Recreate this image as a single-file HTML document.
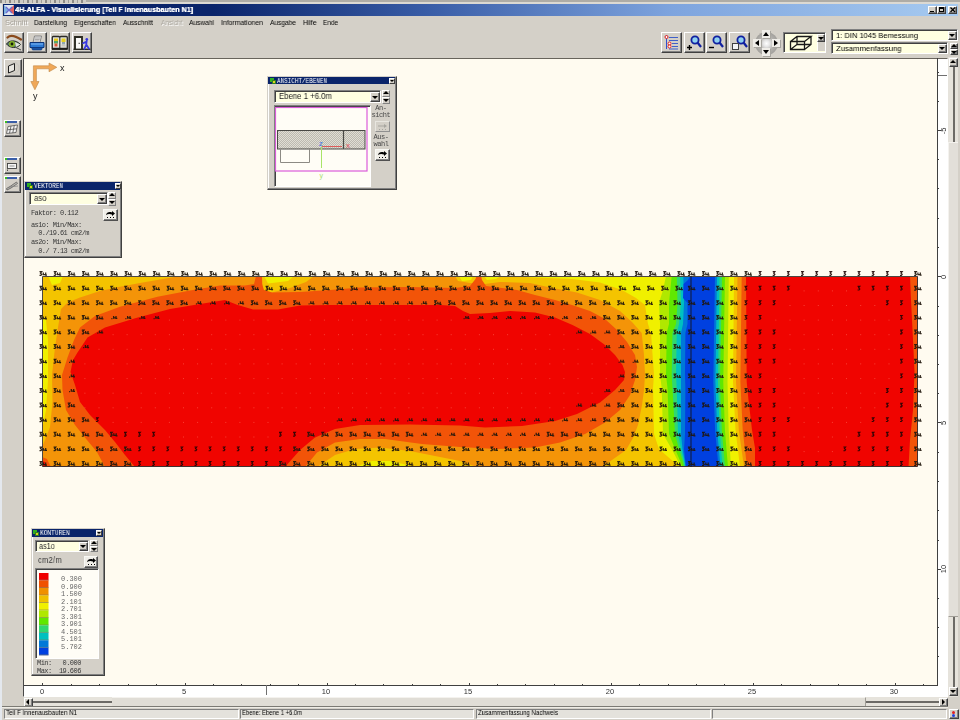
<!DOCTYPE html>
<html lang="de"><head><meta charset="utf-8"><title>4H-ALFA - Visualisierung</title>
<style>
*{box-sizing:border-box;margin:0;padding:0}
html,body{width:960px;height:720px;overflow:hidden;background:#d4d0c8}
body{position:relative;font-family:"Liberation Sans",sans-serif;font-size:8px;color:#000}
.a{position:absolute}
.t{position:absolute;white-space:nowrap;line-height:1;will-change:transform}
.m{font-family:"Liberation Mono",monospace}
.btn{position:absolute;background:#d4d0c8;border:1px solid;border-color:#fff #404040 #404040 #fff;box-shadow:inset -1px -1px 0 #808080}
.sunk{position:absolute;border:1px solid;border-color:#808080 #fff #fff #808080;box-shadow:inset 1px 1px 0 #404040}
.pan{position:absolute;background:#d4d0c8;border:1px solid;border-color:#d4d0c8 #404040 #404040 #d4d0c8;box-shadow:inset -1px -1px 0 #808080,inset 1px 1px 0 #fff}
.ptl{position:absolute;left:0;right:1px;top:0;height:7.500px;background:#0a246a}
.combo{position:absolute;background:#ffffe1;border:1px solid;border-color:#808080 #fff #fff #808080;box-shadow:inset 1px 1px 0 #404040}
.arr{position:absolute;width:0;height:0;border-left:3px solid transparent;border-right:3px solid transparent}
.dn{border-top:3px solid #000}.up{border-bottom:3px solid #000}
</style></head><body>
<!-- top strip (remnant of another window) -->
<div class="a" style="left:0;top:0;width:960px;height:4px;background:#dcd9d2"></div>
<div class="a" style="left:0;top:0;width:86px;height:3px;background:repeating-linear-gradient(90deg,#8c8a86 0 2px,#cfccc6 2px 5px,#a09e9a 5px 6px,#d4d0c8 6px 9px)"></div>
<div class="a" style="left:86px;top:0;width:874px;height:2px;background:#aeaca6"></div>
<!-- title bar -->
<div class="a" style="left:3px;top:4px;width:955px;height:12px;background:linear-gradient(90deg,#0a246a 0,#0a246a 22%,#3a5ea8 45%,#7ea4de 70%,#a6caf0 100%)"></div>
<svg class="a" style="left:4px;top:5px" width="10" height="10" viewBox="0 0 10 10"><rect width="10" height="10" fill="#dfe6f2"/><path d="M0 0L5 5L0 10Z" fill="#7fb0e0"/><path d="M10 0L5 5L10 10Z" fill="#e06060"/><path d="M2 2L8 8M8 2L2 8" stroke="#6a6ad0" stroke-width="1.2"/></svg>
<div class="t" style="left:15px;top:6px;font-size:7.600px;font-weight:bold;color:#fff;text-shadow:.300px 0 0 #fff;transform-origin:0 0;transform:scaleX(0.942)">4H-ALFA - Visualisierung [Teil F Innenausbauten N1]</div>
<div class="btn" style="left:928px;top:6px;width:9px;height:8px"></div><div class="a" style="left:930px;top:11px;width:4px;height:1px;background:#000"></div>
<div class="btn" style="left:937px;top:6px;width:9px;height:8px"></div><div class="a" style="left:939px;top:7px;width:5px;height:5px;border:1px solid #000;border-top-width:2px"></div>
<div class="btn" style="left:948px;top:6px;width:9px;height:8px"></div>
<svg class="a" style="left:950px;top:7px" width="6" height="6" viewBox="0 0 6 6"><path d="M0.5 0.5L5 5M5 0.5L0.5 5" stroke="#000" stroke-width="1.3"/></svg>
<!-- menu bar -->
<div class="t" style="left:5px;top:18.600px;font-size:7.400px;color:#a8a49c;text-shadow:1px 1px 0 #fff;transform-origin:0 0;transform:scaleX(0.995)">Schnitt</div>
<div class="t" style="left:33.5px;top:18.600px;font-size:7.400px;transform-origin:0 0;transform:scaleX(0.883)">Darstellung</div>
<div class="t" style="left:73.5px;top:18.600px;font-size:7.400px;transform-origin:0 0;transform:scaleX(0.897)">Eigenschaften</div>
<div class="t" style="left:123px;top:18.600px;font-size:7.400px;transform-origin:0 0;transform:scaleX(0.880)">Ausschnitt</div>
<div class="t" style="left:160.5px;top:18.600px;font-size:7.400px;color:#a8a49c;text-shadow:1px 1px 0 #fff;transform-origin:0 0;transform:scaleX(0.887)">Ansicht</div>
<div class="t" style="left:189px;top:18.600px;font-size:7.400px;transform-origin:0 0;transform:scaleX(0.895)">Auswahl</div>
<div class="t" style="left:221px;top:18.600px;font-size:7.400px;transform-origin:0 0;transform:scaleX(0.929)">Informationen</div>
<div class="t" style="left:270px;top:18.600px;font-size:7.400px;transform-origin:0 0;transform:scaleX(0.891)">Ausgabe</div>
<div class="t" style="left:302.5px;top:18.600px;font-size:7.400px;transform-origin:0 0;transform:scaleX(0.912)">Hilfe</div>
<div class="t" style="left:323px;top:18.600px;font-size:7.400px;transform-origin:0 0;transform:scaleX(0.869)">Ende</div>
<!-- toolbar left -->
<div class="btn" style="left:4px;top:32px;width:20px;height:21px"></div>
<div class="btn" style="left:27px;top:32px;width:20px;height:21px"></div>
<div class="btn" style="left:49.500px;top:32px;width:20px;height:21px"></div>
<div class="btn" style="left:72px;top:32px;width:20px;height:21px"></div>
<!-- eye icon -->
<svg class="a" style="left:5px;top:33px" width="18" height="19" viewBox="0 0 18 19"><path d="M2.500 4.500C5 2 10 2.500 16 6.500" stroke="#8a4a1c" stroke-width="2.200" fill="none" stroke-linecap="round"/><path d="M1.500 11C4 7 11 6.500 15.500 11.500C12 15.500 5 15.500 1.500 11Z" fill="#5c7870" stroke="#202820" stroke-width="1"/><path d="M10 9L15.500 11.500L11 14Z" fill="#e0e4dc"/><circle cx="7" cy="11" r="3" fill="#86b428"/><circle cx="7" cy="11" r="1.400" fill="#142008"/><path d="M11 14.500L16 17" stroke="#484848" stroke-width="1"/></svg>
<!-- printer icon -->
<svg class="a" style="left:28px;top:33px" width="18" height="19" viewBox="0 0 18 19"><path d="M6.500 3L13.500 3L12 9.500L5 9.500Z" fill="#e4e4e4" stroke="#707070" stroke-width=".8"/><path d="M7 5H12M6.700 6.500H11.700M6.300 8H11.300" stroke="#909090" stroke-width=".7"/><path d="M2 9.500H16V14.500H2Z" fill="#2c7ad4" stroke="#0c3478" stroke-width="1"/><path d="M3.500 14.500H14.500L13.500 17H4.500Z" fill="#1a54a4" stroke="#0c3478" stroke-width=".6"/><path d="M3 11H15" stroke="#80b8f4" stroke-width="1"/></svg>
<!-- book icon -->
<svg class="a" style="left:50.500px;top:34px" width="18" height="18" viewBox="0 0 18 18"><path d="M1.300 3.500Q1.300 2.500 2.300 2.500H7.500Q8.700 2.500 8.700 3.600Q8.700 2.500 9.900 2.500H15.300Q16.300 2.500 16.300 3.500V14.500H1.300Z" fill="#e4e4e0" stroke="#2a2a26" stroke-width="1.300"/><path d="M8.800 3V15.500" stroke="#2a2a26" stroke-width="1.100"/><path d="M1 15H16.600" stroke="#1c1c1a" stroke-width="1.800"/><rect x="3" y="4.500" width="4" height="2.500" fill="#e8c818"/><rect x="3" y="7" width="4" height="2.500" fill="#58a868"/><rect x="3.500" y="9.500" width="3" height="3" fill="#e05838"/><rect x="10.500" y="4.500" width="4" height="3.500" fill="#e8d020"/><rect x="11" y="8" width="3" height="2.500" fill="#90a8b0"/><rect x="10.500" y="10.500" width="4" height="2" fill="#c8c8c0"/></svg>
<!-- exit icon -->
<svg class="a" style="left:73px;top:34px" width="19" height="18" viewBox="0 0 19 18"><path d="M2 15V3H9V15" fill="#fbfbf8" stroke="#2c2c22" stroke-width="1.900"/><path d="M0.500 15.300H17.500" stroke="#2c2c22" stroke-width="1.400"/><path d="M5.500 9.300H7" stroke="#505048" stroke-width="1"/><circle cx="13.800" cy="5.300" r="1.300" fill="#3838e0"/><path d="M13.800 6.500L13.300 10.500L11.300 14.800M13.300 10.500L16 14.800M10 9.200L13.600 7.600" stroke="#3838e0" stroke-width="1.700" fill="none" stroke-linecap="round"/></svg>
<!-- toolbar right -->
<div class="btn" style="left:661px;top:32px;width:21px;height:21px"></div>
<div class="btn" style="left:684px;top:32px;width:21px;height:21px"></div>
<div class="btn" style="left:706px;top:32px;width:21px;height:21px"></div>
<div class="btn" style="left:729px;top:32px;width:21px;height:21px"></div>
<svg class="a" style="left:663px;top:34px" width="17" height="17" viewBox="0 0 17 17"><path d="M3.500 1V15" stroke="#3050d0" stroke-width="1"/><path d="M6 3.500H15M6 6.500H15M9 9.500H15M9 12.500H15M6 15H15" stroke="#4060c8" stroke-width="1"/><circle cx="3.5" cy="3" r="1.500" fill="#fff" stroke="#e02020" stroke-width="1"/><circle cx="6.500" cy="9.500" r="1.500" fill="#fff" stroke="#e02020" stroke-width="1"/><circle cx="6.500" cy="12.500" r="1.500" fill="#fff" stroke="#e02020" stroke-width="1"/></svg>
<svg class="a" style="left:686px;top:34px" width="17" height="17" viewBox="0 0 17 17"><circle cx="9" cy="6" r="3.600" fill="#8fd0f0" stroke="#1020a0" stroke-width="1.800"/><path d="M11.500 8.500L15 13" stroke="#1020a0" stroke-width="2.200"/><path d="M1 13.500H6M3.500 11V16" stroke="#000" stroke-width="1.400"/></svg>
<svg class="a" style="left:708px;top:34px" width="17" height="17" viewBox="0 0 17 17"><circle cx="9" cy="6" r="3.600" fill="#8fd0f0" stroke="#1020a0" stroke-width="1.800"/><path d="M11.500 8.500L15 13" stroke="#1020a0" stroke-width="2.200"/><path d="M1 13.500H6" stroke="#000" stroke-width="1.400"/></svg>
<svg class="a" style="left:731px;top:34px" width="17" height="17" viewBox="0 0 17 17"><circle cx="10" cy="6" r="3.600" fill="#8fd0f0" stroke="#1020a0" stroke-width="1.800"/><path d="M12.500 8.500L16 13" stroke="#1020a0" stroke-width="2.200"/><rect x="1.500" y="9.500" width="6" height="6" fill="#f4f4f4" stroke="#404040" stroke-width="1"/></svg>
<!-- nav pad -->
<div class="a" style="left:754.500px;top:31.500px;width:23px;height:23px;border-radius:50%;background:radial-gradient(circle,#fff 0,#e8e8e8 18%,#b4b2ae 45%,#a09e9a 75%,#b8b6b0 100%)"></div>
<div class="a" style="left:762px;top:29.500px;width:8px;height:8px;background:#efede8;box-shadow:1px 1px 0 #a8a6a0"></div><div class="a" style="left:763px;top:31.500px;width:0;height:0;border-left:3px solid transparent;border-right:3px solid transparent;border-bottom:4px solid #000"></div>
<div class="a" style="left:762px;top:48px;width:8px;height:8px;background:#efede8;box-shadow:1px 1px 0 #a8a6a0"></div><div class="a" style="left:763px;top:50px;width:0;height:0;border-left:3px solid transparent;border-right:3px solid transparent;border-top:4px solid #000"></div>
<div class="a" style="left:753px;top:39px;width:8px;height:8px;background:#efede8;box-shadow:1px 1px 0 #a8a6a0"></div><div class="a" style="left:754.500px;top:40px;width:0;height:0;border-top:3px solid transparent;border-bottom:3px solid transparent;border-right:4px solid #000"></div>
<div class="a" style="left:771.500px;top:39px;width:8px;height:8px;background:#efede8;box-shadow:1px 1px 0 #a8a6a0"></div><div class="a" style="left:773.500px;top:40px;width:0;height:0;border-top:3px solid transparent;border-bottom:3px solid transparent;border-left:4px solid #000"></div>
<!-- 3d view selector -->
<div class="combo" style="left:783px;top:32px;width:43px;height:21px"></div>
<svg class="a" style="left:789px;top:34px" width="24" height="17" viewBox="0 0 24 17"><path d="M1.500 7.500H15.500V15.500H1.500ZM1.500 7.500L8 2.500H22L15.500 7.500M22 2.500V10.500L15.500 15.500M8 2.500V10.500L1.500 15.500M8 10.500H22" fill="none" stroke="#181818" stroke-width="1.300"/></svg>
<div class="btn" style="left:817px;top:34px;width:8px;height:8px"></div><div class="arr dn" style="left:818px;top:37px"></div>
<div class="a" style="left:817px;top:42px;width:8px;height:9px;background:#d4d0c8;border-left:1px solid #fff"></div>
<!-- combos top right -->
<div class="combo" style="left:831px;top:29px;width:127px;height:12px"></div>
<div class="t" style="left:836px;top:31.500px;font-size:8px;transform-origin:0 0;transform:scaleX(0.941)">1: DIN 1045 Bemessung</div>
<div class="btn" style="left:948px;top:31px;width:9px;height:9px"></div><div class="arr dn" style="left:949px;top:34px"></div>
<div class="combo" style="left:831px;top:42px;width:117px;height:12px"></div>
<div class="t" style="left:836px;top:44.500px;font-size:8px;transform-origin:0 0;transform:scaleX(0.963)">Zusammenfassung</div>
<div class="btn" style="left:938px;top:44px;width:9px;height:9px"></div><div class="arr dn" style="left:939px;top:47px"></div>
<div class="btn" style="left:950px;top:43px;width:8px;height:6px"></div><div class="arr up" style="left:951px;top:44px;border-bottom-width:3px"></div>
<div class="btn" style="left:950px;top:49px;width:8px;height:6px"></div><div class="arr dn" style="left:951px;top:51px"></div>
<!-- window left edge highlight -->
<div class="a" style="left:0;top:4px;width:2px;height:716px;background:#e4e8ee"></div>
<!-- canvas -->
<div class="a" style="left:23px;top:57.500px;width:925px;height:639.500px;background:#fff;border:1px solid;border-color:#68645c #fff #fff #484848"></div>
<div class="a" style="left:24px;top:58.500px;width:913px;height:626.500px;background:#fffbf0"></div>
<!-- rulers -->
<div class="a" style="left:937px;top:58px;width:1px;height:628px;background:#404040"></div>
<div class="a" style="left:24px;top:685px;width:914px;height:1px;background:#404040"></div>
<!-- sidebar buttons -->
<div class="btn" style="left:4px;top:59px;width:18px;height:18px"></div>
<svg class="a" style="left:6px;top:61px" width="14" height="14" viewBox="0 0 14 14"><ellipse cx="8.500" cy="7" rx="4.500" ry="5.500" fill="none" stroke="#c8c6c0" stroke-width="1"/><path d="M2.500 5L8.500 2.500V9.500L2.500 12Z" fill="#e8e6e0" stroke="#202020" stroke-width="1"/></svg>
<div class="btn" style="left:4px;top:120px;width:17px;height:17px"></div>
<div class="a" style="left:5px;top:121px;width:14px;height:2px;background:#3a5ea8"></div><div class="a" style="left:5px;top:121px;width:2px;height:2px;background:#40c020"></div><div class="a" style="left:17px;top:121px;width:2px;height:2px;background:#e8e8e8"></div>
<svg class="a" style="left:6px;top:124px" width="13" height="11" viewBox="0 0 13 11"><path d="M2 2.500L11.500 1L10 8.500L0.500 9.500ZM5 2L3.500 9.200M8.300 1.500L6.800 8.800M1.500 5.800L10.800 4.800" fill="#f4f4f4" stroke="#505050" stroke-width=".8"/></svg>
<div class="btn" style="left:4px;top:157px;width:17px;height:17px"></div>
<div class="a" style="left:5px;top:158px;width:14px;height:2px;background:#3a5ea8"></div><div class="a" style="left:5px;top:158px;width:2px;height:2px;background:#40c020"></div><div class="a" style="left:17px;top:158px;width:2px;height:2px;background:#e8e8e8"></div>
<svg class="a" style="left:6px;top:161px" width="13" height="11" viewBox="0 0 13 11"><rect x="1.500" y="2.500" width="9" height="5" fill="#f4f4f4" stroke="#404040" stroke-width=".9"/><path d="M3.500 5H8.500" stroke="#909090" stroke-width="1"/><path d="M1.500 8.500V10" stroke="#404040" stroke-width=".9"/></svg>
<div class="btn" style="left:4px;top:176px;width:17px;height:17px"></div>
<div class="a" style="left:5px;top:177px;width:14px;height:2px;background:#3a5ea8"></div><div class="a" style="left:5px;top:177px;width:2px;height:2px;background:#40c020"></div><div class="a" style="left:17px;top:177px;width:2px;height:2px;background:#e8e8e8"></div>
<svg class="a" style="left:6px;top:180px" width="13" height="11" viewBox="0 0 13 11"><path d="M0.500 8.500L4 6.500L10.500 2L11.500 3.500L5 8L1 10Z" fill="#b8b6b0" stroke="#606060" stroke-width=".8"/><path d="M3 7L12 6" stroke="#808080" stroke-width=".7"/></svg>
<!-- axis icon -->
<svg class="a" style="left:28px;top:60px" width="32" height="32" viewBox="0 0 32 32"><path d="M5.400 5.800H21V3L28.800 7.300L21 11.800V8.800H8.400V21.500H11L6.900 29.800L2.800 21.500H5.400Z" fill="#f0a858" stroke="#c08848" stroke-width=".6"/></svg>
<div class="t" style="left:59.500px;top:63.500px;font-size:9px;color:#202020">x</div>
<div class="t" style="left:33px;top:92px;font-size:9px;color:#202020">y</div>
<!-- vertical scrollbar -->
<div class="a" style="left:948px;top:57px;width:10px;height:640px;background:#e6e3dc"></div>
<div class="a" style="left:953px;top:66px;width:2px;height:622px;background:#6c6a66"></div>
<div class="a" style="left:948px;top:142px;width:10px;height:475px;background:#e2dfd9;border-left:1px solid #f4f2ee;border-bottom:1px solid #a09d96;border-top:1px solid #f4f2ee"></div>
<div class="btn" style="left:949px;top:58px;width:9px;height:9px"></div><div class="arr up" style="left:950px;top:60px"></div>
<div class="btn" style="left:949px;top:687px;width:9px;height:9px"></div><div class="arr dn" style="left:950px;top:690px"></div>
<!-- horizontal scrollbar -->
<div class="a" style="left:24px;top:697px;width:924px;height:10px;background:#e6e3dc"></div>
<div class="a" style="left:32px;top:701px;width:908px;height:2px;background:#6c6a66"></div>
<div class="a" style="left:112px;top:697px;width:754px;height:10px;background:#e0ddd6;border-top:1px solid #f4f2ee;border-right:1px solid #a09d96"></div>
<div class="btn" style="left:24px;top:698px;width:9px;height:9px"></div><div class="a" style="left:26px;top:699px;width:0;height:0;border-top:3px solid transparent;border-bottom:3px solid transparent;border-right:3px solid #000"></div>
<div class="btn" style="left:939px;top:698px;width:9px;height:9px"></div><div class="a" style="left:942px;top:699px;width:0;height:0;border-top:3px solid transparent;border-bottom:3px solid transparent;border-left:3px solid #000"></div>
<div class="a" style="left:2px;top:706px;width:946px;height:1px;background:#7c7a74"></div><div class="a" style="left:2px;top:707px;width:946px;height:1px;background:#eeece6"></div>
<!-- status bar -->
<div class="sunk" style="left:4px;top:709px;width:235px;height:10px;box-shadow:none;background:#e4e2dc"></div><div class="t" style="left:6px;top:709.200px;font-size:7.5px;transform-origin:0 0;transform:scaleX(0.831)">Teil F Innenausbauten N1</div>
<div class="sunk" style="left:240px;top:709px;width:234px;height:10px;box-shadow:none;background:#e4e2dc"></div><div class="t" style="left:242px;top:709.200px;font-size:7.5px;transform-origin:0 0;transform:scaleX(0.780)">Ebene: Ebene 1 +6.0m</div>
<div class="sunk" style="left:476px;top:709px;width:235px;height:10px;box-shadow:none;background:#e4e2dc"></div><div class="t" style="left:478px;top:709.200px;font-size:7.5px;transform-origin:0 0;transform:scaleX(0.813)">Zusammenfassung Nachweis</div>
<div class="sunk" style="left:712px;top:709px;width:235px;height:10px;box-shadow:none;background:#e4e2dc"></div>
<div class="btn" style="left:949px;top:709px;width:10px;height:10px"></div><div class="a" style="left:952px;top:711px;width:3px;height:3px;border-radius:50%;background:#e02020"></div><div class="a" style="left:952px;top:714px;width:3px;height:3px;border-radius:50%;background:#2040e0"></div>
<!-- ruler ticks and labels -->
<svg class="a" style="left:0;top:0" width="960" height="720" viewBox="0 0 960 720" shape-rendering="crispEdges">
<path d="M42.5 682.5V685M71.5 683.8V685M99.5 683.8V685M128.5 683.8V685M156.5 683.8V685M185.5 682.5V685M213.5 683.8V685M241.5 683.8V685M270.5 683.8V685M298.5 683.8V685M327.5 682.5V685M355.5 683.8V685M383.5 683.8V685M412.5 683.8V685M440.5 683.8V685M469.5 682.5V685M497.5 683.8V685M525.5 683.8V685M554.5 683.8V685M582.5 683.8V685M611.5 682.5V685M639.5 683.8V685M668.5 683.8V685M696.5 683.8V685M724.5 683.8V685M753.5 682.5V685M781.5 683.8V685M810.5 683.8V685M838.5 683.8V685M866.5 683.8V685M895.5 682.5V685M923.5 683.8V685" stroke="#404040" stroke-width="1" fill="none"/>
<path d="M938 72.5H939.2M938 101.5H939.2M938 130.5H940.5M938 159.5H939.2M938 188.5H939.2M938 218.5H939.2M938 247.5H939.2M938 276.5H940.5M938 306.5H939.2M938 335.5H939.2M938 364.5H939.2M938 393.5H939.2M938 422.5H940.5M938 452.5H939.2M938 481.5H939.2M938 510.5H939.2M938 540.5H939.2M938 569.5H940.5M938 598.5H939.2M938 627.5H939.2M938 656.5H939.2" stroke="#404040" stroke-width="1" fill="none"/>
<path d="M266.500 685V695M938 75.500H947" stroke="#707070" stroke-width="1" fill="none"/>
</svg>
<div class="t" style="left:31.5px;top:688px;width:20px;text-align:center;font-size:7.5px;color:#303030">0</div>
<div class="t" style="left:173.6px;top:688px;width:20px;text-align:center;font-size:7.5px;color:#303030">5</div>
<div class="t" style="left:315.6px;top:688px;width:20px;text-align:center;font-size:7.5px;color:#303030">10</div>
<div class="t" style="left:457.6px;top:688px;width:20px;text-align:center;font-size:7.5px;color:#303030">15</div>
<div class="t" style="left:599.7px;top:688px;width:20px;text-align:center;font-size:7.5px;color:#303030">20</div>
<div class="t" style="left:741.8px;top:688px;width:20px;text-align:center;font-size:7.5px;color:#303030">25</div>
<div class="t" style="left:883.8px;top:688px;width:20px;text-align:center;font-size:7.5px;color:#303030">30</div>
<div class="t" style="left:934px;top:126.5px;width:20px;height:8px;text-align:center;font-size:7.5px;color:#303030;transform:rotate(-90deg)">-5</div>
<div class="t" style="left:934px;top:272.8px;width:20px;height:8px;text-align:center;font-size:7.5px;color:#303030;transform:rotate(-90deg)">0</div>
<div class="t" style="left:934px;top:419.0px;width:20px;height:8px;text-align:center;font-size:7.5px;color:#303030;transform:rotate(-90deg)">5</div>
<div class="t" style="left:934px;top:565.2px;width:20px;height:8px;text-align:center;font-size:7.5px;color:#303030;transform:rotate(-90deg)">10</div>
<!-- contour plot -->
<svg class="a" style="left:0;top:0" width="960" height="720" viewBox="0 0 960 720">
<clipPath id="pc"><rect x="42.50" y="276.25" width="875.00" height="190.00"/></clipPath>
<g clip-path="url(#pc)">
<rect x="42" y="276" width="650" height="191" fill="#f4c400"/>
<polygon points="500.0,276.0 535.0,277.5 572.0,279.0 600.0,282.5 622.0,290.0 636.0,298.0 645.0,305.0 648.0,324.0 651.0,333.0 654.0,375.0 653.0,388.0 654.0,434.0 659.0,449.0 675.0,463.0 678.0,467.0 692.0,467.0 692.0,276.0" fill="#f0f000"/>
<polygon points="666.0,276.0 663.0,290.0 659.0,303.0 660.0,324.0 660.0,375.0 661.7,388.0 663.0,434.0 671.7,449.0 679.0,463.0 680.0,467.0 692.0,467.0 692.0,276.0" fill="#b0e800"/>
<polygon points="671.7,276.0 669.0,303.0 669.0,324.0 666.7,333.0 666.0,375.0 667.5,388.0 669.0,434.0 675.0,449.0 681.0,463.0 682.0,467.0 692.0,467.0 692.0,276.0" fill="#60e800"/>
<polygon points="676.7,276.0 677.5,303.0 676.0,324.0 672.5,333.0 671.7,375.0 672.5,388.0 675.0,434.0 679.0,449.0 683.3,463.0 684.0,467.0 692.0,467.0 692.0,276.0" fill="#30d870"/>
<polygon points="680.0,276.0 681.0,303.0 679.0,324.0 676.7,333.0 676.0,375.0 676.7,388.0 678.0,434.0 681.0,449.0 684.5,463.0 685.0,467.0 692.0,467.0 692.0,276.0" fill="#00c0c0"/>
<polygon points="683.3,276.0 684.0,303.0 683.0,324.0 681.0,333.0 681.0,388.0 681.0,434.0 682.5,449.0 685.0,463.0 685.5,467.0 692.0,467.0 692.0,276.0" fill="#0078d8"/>
<polygon points="690.0,276.0 688.0,280.0 683.5,284.0 683.0,298.0 687.5,303.0 687.5,324.0 685.4,333.0 685.0,375.0 685.4,388.0 685.0,434.0 684.0,449.0 685.5,463.0 686.0,467.0 692.0,467.0 692.0,276.0" fill="#0040e0"/>
<polygon points="48.0,276.0 63.0,276.0 60.0,283.0 52.0,285.0" fill="#f0f000"/>
<polygon points="42.0,315.0 46.0,320.0 48.0,340.0 48.0,380.0 46.0,410.0 42.0,430.0" fill="#f0f000"/>
<polygon points="459.0,276.0 473.0,276.0 471.0,280.0 462.0,281.0" fill="#f0f000"/>
<polygon points="484.0,276.0 501.0,276.0 496.0,279.0 487.0,280.0" fill="#f0f000"/>
<polygon points="355.0,467.0 372.0,461.0 390.0,461.0 410.0,465.5 412.0,467.0" fill="#f0f000"/>
<polygon points="264.0,276.0 294.0,276.0 288.0,281.0 268.0,283.5" fill="#f0f000"/>
<polygon points="42.0,447.0 45.0,440.0 50.0,427.0 52.5,402.0 52.0,375.0 55.0,347.5 58.0,327.5 61.0,309.0 67.5,302.5 80.0,297.5 100.0,291.0 120.0,286.8 140.0,283.0 160.0,279.5 180.0,276.0 262.0,276.0 263.0,290.0 272.0,292.5 290.0,288.0 306.0,282.0 314.0,276.0 455.0,276.0 458.0,281.0 470.0,283.0 485.0,284.0 500.0,282.0 530.0,283.0 550.0,287.5 577.0,292.5 600.0,300.0 620.0,311.0 632.0,322.0 641.7,333.0 644.0,355.0 645.0,375.0 644.0,390.0 642.0,405.0 638.0,425.0 633.0,438.0 626.0,450.0 612.0,460.0 602.0,467.0 477.0,467.0 460.0,461.0 435.0,456.0 410.0,451.0 380.0,447.5 355.0,449.0 335.0,455.0 317.0,467.0 42.0,467.0" fill="#f49408"/>
<polygon points="105.0,467.0 97.0,452.0 87.0,440.0 75.0,425.0 66.0,410.0 62.5,390.0 62.0,375.0 67.5,357.5 74.0,340.0 80.0,327.5 95.0,316.0 120.0,306.8 157.5,296.8 190.0,290.5 220.0,285.5 245.0,285.5 254.0,284.0 256.0,276.0 262.0,276.0 262.0,284.0 264.0,290.0 272.0,292.5 300.0,292.0 330.0,290.0 360.0,287.5 410.0,287.0 455.0,288.0 470.0,286.0 475.5,279.0 476.5,276.0 481.0,276.0 482.0,280.0 486.0,286.0 517.0,290.0 535.0,295.0 555.0,300.0 572.0,305.0 590.0,311.0 605.0,319.0 617.0,330.0 627.0,342.0 635.0,355.0 637.0,367.0 635.0,380.0 630.0,395.0 620.0,410.0 605.0,422.5 585.0,434.0 560.0,442.5 535.0,447.5 497.0,449.0 460.0,447.0 422.0,444.0 385.0,439.0 360.0,439.0 335.0,442.5 317.0,452.5 305.0,467.0" fill="#f25408"/>
<polygon points="135.0,467.0 125.0,455.0 115.0,442.0 105.0,430.0 90.0,415.0 80.0,402.0 75.0,385.0 70.5,372.0 73.0,360.0 77.5,352.5 87.5,337.5 105.0,327.5 136.0,318.0 170.0,309.0 200.0,304.0 225.0,300.0 237.0,304.7 253.0,309.5 278.0,309.5 300.0,305.5 330.0,305.0 380.0,305.0 440.0,305.0 455.0,306.0 463.0,311.0 470.0,314.0 490.0,313.0 510.0,311.0 535.0,312.5 555.0,317.5 572.5,325.0 590.0,334.0 605.0,345.0 615.0,355.0 622.5,365.0 625.0,372.0 624.0,380.0 615.0,390.0 600.0,402.5 577.0,414.0 555.0,421.0 522.0,426.0 485.0,427.5 460.0,425.5 410.0,424.5 360.0,425.0 335.0,429.0 315.0,437.5 300.0,450.0 285.0,467.0" fill="#f00400"/>
<polygon points="42.0,457.0 47.0,459.0 51.0,467.0 42.0,467.0" fill="#f25408"/>
<polygon points="42.0,461.0 45.0,462.0 47.0,467.0 42.0,467.0" fill="#f00400"/>
<polygon points="691.0,276.0 691.0,382.0 691.0,430.0 691.0,467.0 760.0,467.0 760.0,276.0" fill="#0040e0"/>
<polygon points="715.0,276.0 713.3,382.0 715.1,430.0 718.5,467.0 760.0,467.0 760.0,276.0" fill="#0078d8"/>
<polygon points="717.0,276.0 715.4,382.0 717.2,430.0 720.5,467.0 760.0,467.0 760.0,276.0" fill="#00c0c0"/>
<polygon points="719.6,276.0 718.0,382.0 719.6,430.0 722.5,467.0 760.0,467.0 760.0,276.0" fill="#30d870"/>
<polygon points="722.0,276.0 720.0,382.0 721.8,430.0 725.0,467.0 760.0,467.0 760.0,276.0" fill="#60e800"/>
<polygon points="725.0,276.0 723.3,382.0 724.9,430.0 728.0,467.0 760.0,467.0 760.0,276.0" fill="#b0e800"/>
<polygon points="728.8,276.0 727.5,382.0 728.7,430.0 731.0,467.0 760.0,467.0 760.0,276.0" fill="#f0f000"/>
<polygon points="734.0,276.0 733.0,382.0 735.5,430.0 740.0,467.0 760.0,467.0 760.0,276.0" fill="#f4c400"/>
<polygon points="737.5,276.0 736.0,382.0 738.8,430.0 744.0,467.0 760.0,467.0 760.0,276.0" fill="#f49408"/>
<polygon points="741.7,276.0 740.4,382.0 742.7,430.0 747.0,467.0 760.0,467.0 760.0,276.0" fill="#f25408"/>
<polygon points="746.0,276.0 746.7,382.0 748.5,400.0 752.0,430.0 755.0,448.0 755.0,467.0 918.0,467.0 918.0,276.0" fill="#f00400"/>
<polygon points="910.0,276.0 918.0,276.0 918.0,467.0 908.5,467.0 910.0,440.0 913.0,410.0 914.5,372.0 913.0,340.0 911.0,300.0" fill="#f25408"/>
</g>
<path d="M42.500 466.500V276.500H917.500" fill="none" stroke="#4c4640" stroke-width="1"/>
<path d="M42.500 466.500H917.500V276.500" fill="none" stroke="#403030" stroke-width="1"/>
<path d="M691 276V467" stroke="#101830" stroke-width="1"/>
<path d="M39.5 271.6h2.200l-1.200 1.500 1.200 1.200-.800 1h-1.400m3.800-2.800v2.800m0-.700h2.400m0-2.100v2.500h1.300M53.7 271.6h2.200l-1.200 1.500 1.200 1.200-.800 1h-1.400m3.800-2.800v2.800m0-.700h2.400m0-2.100v2.500h1.300M67.9 271.6h2.200l-1.200 1.500 1.200 1.200-.800 1h-1.400m3.800-2.800v2.800m0-.700h2.400m0-2.100v2.500h1.300M82 271.6h2.200l-1.200 1.500 1.200 1.200-.800 1h-1.400m3.800-2.800v2.800m0-.700h2.400m0-2.100v2.500h1.300M96.2 271.6h2.200l-1.200 1.500 1.200 1.200-.800 1h-1.400m3.800-2.800v2.800m0-.700h2.400m0-2.100v2.500h1.300M110.4 271.6h2.200l-1.200 1.500 1.200 1.200-.800 1h-1.400m3.800-2.800v2.800m0-.700h2.400m0-2.100v2.500h1.300M124.6 271.6h2.200l-1.200 1.500 1.200 1.200-.800 1h-1.400m3.800-2.800v2.800m0-.700h2.400m0-2.100v2.500h1.300M138.7 271.6h2.200l-1.200 1.500 1.200 1.200-.800 1h-1.400m3.800-2.800v2.800m0-.700h2.400m0-2.100v2.500h1.300M152.9 271.6h2.200l-1.200 1.500 1.200 1.200-.800 1h-1.400m3.800-2.800v2.800m0-.700h2.400m0-2.100v2.500h1.300M167.1 271.6h2.200l-1.200 1.500 1.200 1.200-.800 1h-1.400m3.800-2.800v2.800m0-.700h2.400m0-2.100v2.500h1.300M181.2 271.6h2.200l-1.200 1.500 1.200 1.200-.800 1h-1.400m3.800-2.800v2.800m0-.700h2.400m0-2.100v2.500h1.300M195.4 271.6h2.200l-1.200 1.500 1.200 1.200-.800 1h-1.400m3.800-2.800v2.800m0-.700h2.400m0-2.100v2.500h1.300M209.6 271.6h2.200l-1.200 1.500 1.200 1.200-.800 1h-1.400m3.800-2.800v2.800m0-.700h2.400m0-2.100v2.500h1.300M223.8 271.6h2.200l-1.200 1.500 1.200 1.200-.800 1h-1.400m3.800-2.800v2.800m0-.700h2.400m0-2.100v2.500h1.300M238 271.6h2.200l-1.200 1.500 1.200 1.200-.800 1h-1.400m3.800-2.800v2.800m0-.700h2.400m0-2.100v2.500h1.300M252.1 271.6h2.200l-1.200 1.500 1.200 1.200-.800 1h-1.400m3.800-2.800v2.800m0-.700h2.400m0-2.100v2.500h1.300M266.3 271.6h2.200l-1.200 1.500 1.200 1.200-.800 1h-1.400m3.800-2.800v2.800m0-.700h2.400m0-2.100v2.500h1.300M280.5 271.6h2.200l-1.200 1.500 1.200 1.200-.800 1h-1.400m3.800-2.800v2.800m0-.700h2.400m0-2.100v2.500h1.300M294.6 271.6h2.200l-1.200 1.500 1.200 1.200-.800 1h-1.400m3.800-2.800v2.800m0-.700h2.400m0-2.100v2.500h1.300M308.8 271.6h2.200l-1.200 1.500 1.200 1.200-.800 1h-1.400m3.800-2.800v2.800m0-.700h2.400m0-2.100v2.500h1.300M323 271.6h2.200l-1.200 1.500 1.200 1.200-.800 1h-1.400m3.800-2.800v2.800m0-.700h2.400m0-2.100v2.500h1.300M337.2 271.6h2.200l-1.200 1.500 1.200 1.200-.800 1h-1.400m3.800-2.800v2.800m0-.700h2.400m0-2.100v2.500h1.300M351.4 271.6h2.200l-1.200 1.500 1.200 1.200-.800 1h-1.400m3.800-2.800v2.800m0-.700h2.400m0-2.100v2.500h1.300M365.5 271.6h2.200l-1.200 1.500 1.200 1.200-.800 1h-1.400m3.800-2.800v2.800m0-.700h2.400m0-2.100v2.500h1.300M379.7 271.6h2.200l-1.200 1.500 1.200 1.200-.800 1h-1.400m3.800-2.800v2.800m0-.700h2.400m0-2.100v2.500h1.300M393.9 271.6h2.200l-1.200 1.500 1.200 1.200-.800 1h-1.400m3.800-2.800v2.800m0-.700h2.400m0-2.100v2.500h1.300M408.1 271.6h2.200l-1.200 1.500 1.200 1.200-.800 1h-1.400m3.800-2.800v2.800m0-.700h2.400m0-2.100v2.500h1.300M422.2 271.6h2.200l-1.200 1.500 1.200 1.200-.800 1h-1.400m3.800-2.800v2.800m0-.700h2.400m0-2.100v2.500h1.300M436.4 271.6h2.200l-1.200 1.500 1.200 1.200-.800 1h-1.400m3.800-2.800v2.800m0-.700h2.400m0-2.100v2.500h1.300M450.6 271.6h2.200l-1.200 1.500 1.200 1.200-.800 1h-1.400m3.800-2.800v2.800m0-.700h2.400m0-2.100v2.500h1.300M464.8 271.6h2.200l-1.200 1.500 1.200 1.200-.800 1h-1.400m3.800-2.800v2.800m0-.700h2.400m0-2.100v2.500h1.300M478.9 271.6h2.200l-1.200 1.500 1.200 1.200-.800 1h-1.400m3.800-2.800v2.800m0-.700h2.400m0-2.100v2.500h1.300M493.1 271.6h2.200l-1.200 1.500 1.200 1.200-.800 1h-1.400m3.800-2.800v2.800m0-.700h2.400m0-2.100v2.500h1.300M507.3 271.6h2.200l-1.200 1.500 1.200 1.200-.800 1h-1.400m3.800-2.800v2.800m0-.700h2.400m0-2.100v2.500h1.300M521.5 271.6h2.200l-1.200 1.500 1.200 1.200-.800 1h-1.400m3.800-2.800v2.800m0-.700h2.400m0-2.100v2.500h1.300M535.6 271.6h2.200l-1.200 1.500 1.200 1.200-.800 1h-1.400m3.800-2.800v2.800m0-.700h2.400m0-2.100v2.500h1.300M549.8 271.6h2.200l-1.200 1.500 1.200 1.200-.800 1h-1.400m3.800-2.800v2.800m0-.700h2.400m0-2.100v2.500h1.300M564 271.6h2.200l-1.200 1.500 1.200 1.200-.800 1h-1.400m3.800-2.800v2.800m0-.700h2.400m0-2.100v2.500h1.300M578.1 271.6h2.200l-1.200 1.500 1.200 1.200-.800 1h-1.400m3.800-2.800v2.800m0-.700h2.400m0-2.100v2.500h1.300M592.3 271.6h2.200l-1.200 1.500 1.200 1.200-.800 1h-1.400m3.800-2.800v2.800m0-.700h2.400m0-2.100v2.500h1.300M606.5 271.6h2.200l-1.200 1.500 1.200 1.200-.800 1h-1.400m3.800-2.800v2.800m0-.700h2.400m0-2.100v2.500h1.300M620.7 271.6h2.200l-1.200 1.500 1.200 1.200-.800 1h-1.400m3.800-2.800v2.800m0-.700h2.400m0-2.100v2.500h1.300M634.9 271.6h2.200l-1.200 1.500 1.200 1.200-.800 1h-1.400m3.800-2.800v2.800m0-.700h2.400m0-2.100v2.500h1.300M649 271.6h2.200l-1.200 1.500 1.200 1.200-.800 1h-1.400m3.800-2.800v2.800m0-.700h2.400m0-2.100v2.500h1.300M663.2 271.6h2.200l-1.200 1.500 1.200 1.200-.800 1h-1.400m3.800-2.800v2.800m0-.700h2.400m0-2.100v2.500h1.300M677.4 271.6h2.200l-1.200 1.500 1.200 1.200-.800 1h-1.400m3.800-2.800v2.800m0-.700h2.400m0-2.100v2.500h1.300M687.9 271.6h2.200l-1.200 1.500 1.200 1.200-.800 1h-1.400m3.800-2.800v2.800m0-.700h2.400m0-2.100v2.500h1.300M702 271.6h2.200l-1.200 1.500 1.200 1.200-.800 1h-1.400m3.800-2.800v2.800m0-.700h2.400m0-2.100v2.500h1.300M716.2 271.6h2.200l-1.200 1.500 1.200 1.200-.800 1h-1.400m3.800-2.800v2.800m0-.700h2.400m0-2.100v2.500h1.300M730.3 271.6h2.200l-1.200 1.500 1.200 1.200-.800 1h-1.400m3.800-2.800v2.800m0-.700h2.400m0-2.100v2.500h1.300M744.5 271.6h2.200l-1.200 1.500 1.200 1.200-.800 1h-1.400m3.800-2.800v2.800m0-.700h2.400m0-2.100v2.500h1.300M914.1 271.6h2.200l-1.200 1.500 1.200 1.200-.800 1h-1.400m3.800-2.800v2.800m0-.700h2.400m0-2.100v2.500h1.300M39.5 286.3h2.200l-1.200 1.500 1.200 1.200-.800 1h-1.400m3.800-2.800v2.800m0-.700h2.400m0-2.100v2.500h1.300M53.6 286.3h2.200l-1.200 1.500 1.200 1.200-.800 1h-1.400m3.800-2.800v2.800m0-.700h2.400m0-2.100v2.500h1.300M67.8 286.3h2.200l-1.200 1.500 1.200 1.200-.800 1h-1.400m3.800-2.800v2.800m0-.700h2.400m0-2.100v2.500h1.300M81.9 286.3h2.200l-1.200 1.500 1.200 1.200-.800 1h-1.400m3.800-2.800v2.800m0-.700h2.400m0-2.100v2.500h1.300M96 286.3h2.200l-1.200 1.500 1.200 1.200-.800 1h-1.400m3.800-2.800v2.800m0-.700h2.400m0-2.100v2.500h1.300M110.2 286.3h2.200l-1.200 1.500 1.200 1.200-.800 1h-1.400m3.800-2.800v2.800m0-.700h2.400m0-2.100v2.500h1.300M124.3 286.3h2.200l-1.200 1.500 1.200 1.200-.800 1h-1.400m3.800-2.800v2.800m0-.700h2.400m0-2.100v2.500h1.300M138.4 286.3h2.200l-1.200 1.500 1.200 1.200-.800 1h-1.400m3.800-2.800v2.800m0-.700h2.400m0-2.100v2.500h1.300M152.5 286.3h2.200l-1.200 1.500 1.200 1.200-.800 1h-1.400m3.800-2.800v2.800m0-.700h2.400m0-2.100v2.500h1.300M166.7 286.3h2.200l-1.200 1.500 1.200 1.200-.800 1h-1.400m3.800-2.800v2.800m0-.700h2.400m0-2.100v2.500h1.300M180.8 286.3h2.200l-1.200 1.500 1.200 1.200-.800 1h-1.400m3.800-2.800v2.800m0-.700h2.400m0-2.100v2.500h1.300M194.9 286.3h2.200l-1.200 1.500 1.200 1.200-.800 1h-1.400m3.800-2.800v2.800m0-.700h2.400m0-2.100v2.500h1.300M209.1 286.3h2.200l-1.200 1.500 1.200 1.200-.800 1h-1.400m3.800-2.800v2.800m0-.700h2.400m0-2.100v2.500h1.300M223.2 286.3h2.200l-1.200 1.500 1.200 1.200-.800 1h-1.400m3.800-2.800v2.800m0-.700h2.400m0-2.100v2.500h1.300M237.3 286.3h2.200l-1.200 1.500 1.200 1.200-.800 1h-1.400m3.800-2.800v2.800m0-.700h2.400m0-2.100v2.500h1.300M251.5 286.3h2.200l-1.200 1.500 1.200 1.200-.800 1h-1.400m3.800-2.800v2.800m0-.700h2.400m0-2.100v2.500h1.300M265.6 286.3h2.200l-1.200 1.500 1.200 1.200-.800 1h-1.400m3.800-2.800v2.800m0-.700h2.400m0-2.100v2.500h1.300M279.7 286.3h2.200l-1.200 1.500 1.200 1.200-.800 1h-1.400m3.800-2.800v2.800m0-.700h2.400m0-2.100v2.500h1.300M293.8 286.3h2.200l-1.200 1.500 1.200 1.200-.800 1h-1.400m3.800-2.800v2.800m0-.700h2.400m0-2.100v2.500h1.300M308 286.3h2.200l-1.200 1.500 1.200 1.200-.800 1h-1.400m3.800-2.800v2.800m0-.700h2.400m0-2.100v2.500h1.300M322.1 286.3h2.200l-1.200 1.500 1.200 1.200-.800 1h-1.400m3.800-2.800v2.800m0-.700h2.400m0-2.100v2.500h1.300M336.2 286.3h2.200l-1.200 1.500 1.200 1.200-.800 1h-1.400m3.800-2.800v2.800m0-.700h2.400m0-2.100v2.500h1.300M350.4 286.3h2.200l-1.200 1.500 1.200 1.200-.800 1h-1.400m3.800-2.800v2.800m0-.700h2.400m0-2.100v2.500h1.300M364.5 286.3h2.200l-1.200 1.500 1.200 1.200-.800 1h-1.400m3.800-2.800v2.800m0-.700h2.400m0-2.100v2.500h1.300M378.6 286.3h2.200l-1.200 1.500 1.200 1.200-.800 1h-1.400m3.800-2.800v2.800m0-.700h2.400m0-2.100v2.500h1.300M392.8 286.3h2.200l-1.200 1.500 1.200 1.200-.800 1h-1.400m3.800-2.800v2.800m0-.700h2.400m0-2.100v2.500h1.300M406.9 286.3h2.200l-1.200 1.500 1.200 1.200-.800 1h-1.400m3.800-2.800v2.800m0-.700h2.400m0-2.100v2.500h1.300M421 286.3h2.200l-1.200 1.500 1.200 1.200-.800 1h-1.400m3.800-2.800v2.800m0-.700h2.400m0-2.100v2.500h1.300M435.1 286.3h2.200l-1.200 1.500 1.200 1.200-.800 1h-1.400m3.800-2.800v2.800m0-.700h2.400m0-2.100v2.500h1.300M449.3 286.3h2.200l-1.200 1.500 1.200 1.200-.800 1h-1.400m3.800-2.800v2.800m0-.700h2.400m0-2.100v2.500h1.300M463.4 286.3h2.200l-1.200 1.500 1.200 1.200-.800 1h-1.400m3.800-2.800v2.800m0-.700h2.400m0-2.100v2.500h1.300M477.5 286.3h2.200l-1.200 1.500 1.200 1.200-.800 1h-1.400m3.800-2.800v2.800m0-.700h2.400m0-2.100v2.500h1.300M491.7 286.3h2.200l-1.200 1.500 1.200 1.200-.800 1h-1.400m3.800-2.800v2.800m0-.700h2.400m0-2.100v2.500h1.300M505.8 286.3h2.200l-1.200 1.500 1.200 1.200-.800 1h-1.400m3.800-2.800v2.800m0-.700h2.400m0-2.100v2.500h1.300M519.9 286.3h2.200l-1.200 1.500 1.200 1.200-.800 1h-1.400m3.800-2.800v2.800m0-.700h2.400m0-2.100v2.500h1.300M534 286.3h2.200l-1.200 1.500 1.200 1.200-.800 1h-1.400m3.800-2.800v2.800m0-.700h2.400m0-2.100v2.500h1.300M548.2 286.3h2.200l-1.200 1.500 1.200 1.200-.800 1h-1.400m3.800-2.800v2.800m0-.700h2.400m0-2.100v2.500h1.300M562.3 286.3h2.200l-1.200 1.500 1.200 1.200-.800 1h-1.400m3.800-2.800v2.800m0-.700h2.400m0-2.100v2.500h1.300M576.4 286.3h2.200l-1.200 1.500 1.200 1.200-.800 1h-1.400m3.800-2.800v2.800m0-.700h2.400m0-2.100v2.500h1.300M590.6 286.3h2.200l-1.200 1.500 1.200 1.200-.800 1h-1.400m3.800-2.800v2.800m0-.700h2.400m0-2.100v2.500h1.300M604.7 286.3h2.200l-1.200 1.500 1.200 1.200-.800 1h-1.400m3.800-2.800v2.800m0-.700h2.400m0-2.100v2.500h1.300M618.8 286.3h2.200l-1.200 1.500 1.200 1.200-.800 1h-1.400m3.800-2.800v2.800m0-.700h2.400m0-2.100v2.500h1.300M633 286.3h2.200l-1.200 1.500 1.200 1.200-.800 1h-1.400m3.800-2.800v2.800m0-.700h2.400m0-2.100v2.500h1.300M647.1 286.3h2.200l-1.200 1.500 1.200 1.200-.800 1h-1.400m3.800-2.800v2.800m0-.700h2.400m0-2.100v2.500h1.300M661.2 286.3h2.200l-1.200 1.500 1.200 1.200-.800 1h-1.400m3.800-2.800v2.800m0-.700h2.400m0-2.100v2.500h1.300M675.4 286.3h2.200l-1.200 1.500 1.200 1.200-.800 1h-1.400m3.800-2.800v2.800m0-.700h2.400m0-2.100v2.500h1.300M687.9 286.3h2.200l-1.200 1.500 1.200 1.200-.800 1h-1.400m3.800-2.800v2.800m0-.700h2.400m0-2.100v2.500h1.300M702 286.3h2.200l-1.200 1.500 1.200 1.200-.800 1h-1.400m3.800-2.800v2.800m0-.700h2.400m0-2.100v2.500h1.300M716.2 286.3h2.200l-1.200 1.500 1.200 1.200-.800 1h-1.400m3.800-2.800v2.800m0-.700h2.400m0-2.100v2.500h1.300M730.3 286.3h2.200l-1.200 1.500 1.200 1.200-.800 1h-1.400m3.800-2.800v2.800m0-.700h2.400m0-2.100v2.500h1.300M914.1 286.3h2.200l-1.200 1.500 1.200 1.200-.800 1h-1.400m3.800-2.800v2.800m0-.700h2.400m0-2.100v2.500h1.300M39.5 300.9h2.200l-1.200 1.500 1.200 1.200-.800 1h-1.400m3.800-2.800v2.800m0-.700h2.400m0-2.100v2.500h1.300M53.6 300.9h2.200l-1.200 1.500 1.200 1.200-.800 1h-1.400m3.800-2.800v2.800m0-.700h2.400m0-2.100v2.500h1.300M67.7 300.9h2.200l-1.200 1.500 1.200 1.200-.800 1h-1.400m3.800-2.800v2.800m0-.700h2.400m0-2.100v2.500h1.300M81.8 300.9h2.200l-1.200 1.500 1.200 1.200-.800 1h-1.400m3.800-2.800v2.800m0-.700h2.400m0-2.100v2.500h1.300M95.9 300.9h2.200l-1.200 1.500 1.200 1.200-.800 1h-1.400m3.800-2.800v2.800m0-.700h2.400m0-2.100v2.500h1.300M110 300.9h2.200l-1.200 1.500 1.200 1.200-.800 1h-1.400m3.800-2.800v2.800m0-.700h2.400m0-2.100v2.500h1.300M124 300.9h2.200l-1.200 1.500 1.200 1.200-.800 1h-1.400m3.800-2.800v2.800m0-.700h2.400m0-2.100v2.500h1.300M138.1 300.9h2.200l-1.200 1.500 1.200 1.200-.800 1h-1.400m3.800-2.800v2.800m0-.700h2.400m0-2.100v2.500h1.300M152.2 300.9h2.200l-1.200 1.500 1.200 1.200-.800 1h-1.400m3.800-2.800v2.800m0-.700h2.400m0-2.100v2.500h1.300M166.3 300.9h2.200l-1.200 1.500 1.200 1.200-.800 1h-1.400m3.800-2.800v2.800m0-.700h2.400m0-2.100v2.500h1.300M180.4 300.9h2.200l-1.200 1.500 1.200 1.200-.800 1h-1.400m3.800-2.800v2.800m0-.700h2.400m0-2.100v2.500h1.300M250.8 300.9h2.200l-1.200 1.500 1.200 1.200-.800 1h-1.400m3.800-2.800v2.800m0-.700h2.400m0-2.100v2.500h1.300M264.9 300.9h2.200l-1.200 1.500 1.200 1.200-.800 1h-1.400m3.800-2.800v2.800m0-.700h2.400m0-2.100v2.500h1.300M279 300.9h2.200l-1.200 1.500 1.200 1.200-.800 1h-1.400m3.800-2.800v2.800m0-.700h2.400m0-2.100v2.500h1.300M293.1 300.9h2.200l-1.200 1.500 1.200 1.200-.800 1h-1.400m3.800-2.800v2.800m0-.700h2.400m0-2.100v2.500h1.300M434 300.9h2.200l-1.200 1.500 1.200 1.200-.800 1h-1.400m3.800-2.800v2.800m0-.700h2.400m0-2.100v2.500h1.300M448.1 300.9h2.200l-1.200 1.500 1.200 1.200-.800 1h-1.400m3.800-2.800v2.800m0-.700h2.400m0-2.100v2.500h1.300M462.2 300.9h2.200l-1.200 1.500 1.200 1.200-.800 1h-1.400m3.800-2.800v2.800m0-.700h2.400m0-2.100v2.500h1.300M476.3 300.9h2.200l-1.200 1.500 1.200 1.200-.800 1h-1.400m3.800-2.800v2.800m0-.700h2.400m0-2.100v2.500h1.300M490.4 300.9h2.200l-1.200 1.500 1.200 1.200-.800 1h-1.400m3.800-2.800v2.800m0-.700h2.400m0-2.100v2.500h1.300M504.5 300.9h2.200l-1.200 1.500 1.200 1.200-.800 1h-1.400m3.800-2.800v2.800m0-.700h2.400m0-2.100v2.500h1.300M518.6 300.9h2.200l-1.200 1.500 1.200 1.200-.800 1h-1.400m3.800-2.800v2.800m0-.700h2.400m0-2.100v2.500h1.300M532.6 300.9h2.200l-1.200 1.500 1.200 1.200-.800 1h-1.400m3.800-2.800v2.800m0-.700h2.400m0-2.100v2.500h1.300M546.7 300.9h2.200l-1.200 1.500 1.200 1.200-.800 1h-1.400m3.800-2.800v2.800m0-.700h2.400m0-2.100v2.500h1.300M560.8 300.9h2.200l-1.200 1.500 1.200 1.200-.800 1h-1.400m3.800-2.800v2.800m0-.700h2.400m0-2.100v2.500h1.300M574.9 300.9h2.200l-1.200 1.500 1.200 1.200-.800 1h-1.400m3.800-2.800v2.800m0-.700h2.400m0-2.100v2.500h1.300M589 300.9h2.200l-1.200 1.500 1.200 1.200-.800 1h-1.400m3.800-2.800v2.800m0-.700h2.400m0-2.100v2.500h1.300M603.1 300.9h2.200l-1.200 1.500 1.200 1.200-.800 1h-1.400m3.800-2.800v2.800m0-.700h2.400m0-2.100v2.500h1.300M617.2 300.9h2.200l-1.200 1.500 1.200 1.200-.800 1h-1.400m3.800-2.800v2.800m0-.700h2.400m0-2.100v2.500h1.300M631.3 300.9h2.200l-1.200 1.500 1.200 1.200-.800 1h-1.400m3.800-2.800v2.800m0-.700h2.400m0-2.100v2.500h1.300M645.4 300.9h2.200l-1.200 1.500 1.200 1.200-.800 1h-1.400m3.800-2.800v2.800m0-.700h2.400m0-2.100v2.500h1.300M659.5 300.9h2.200l-1.200 1.500 1.200 1.200-.800 1h-1.400m3.800-2.800v2.800m0-.700h2.400m0-2.100v2.500h1.300M673.5 300.9h2.200l-1.200 1.500 1.200 1.200-.800 1h-1.400m3.800-2.800v2.800m0-.700h2.400m0-2.100v2.500h1.300M687.9 300.9h2.200l-1.200 1.500 1.200 1.200-.800 1h-1.400m3.800-2.800v2.800m0-.700h2.400m0-2.100v2.500h1.300M702 300.9h2.200l-1.200 1.500 1.200 1.200-.800 1h-1.400m3.800-2.800v2.800m0-.700h2.400m0-2.100v2.500h1.300M716.2 300.9h2.200l-1.200 1.500 1.200 1.200-.800 1h-1.400m3.800-2.800v2.800m0-.700h2.400m0-2.100v2.500h1.300M730.3 300.9h2.200l-1.200 1.500 1.200 1.200-.800 1h-1.400m3.800-2.800v2.800m0-.700h2.400m0-2.100v2.500h1.300M914.1 300.9h2.200l-1.200 1.500 1.200 1.200-.800 1h-1.400m3.800-2.800v2.800m0-.700h2.400m0-2.100v2.500h1.300M39.5 315.5h2.200l-1.200 1.500 1.200 1.200-.800 1h-1.400m3.800-2.800v2.800m0-.700h2.400m0-2.100v2.500h1.300M53.6 315.5h2.200l-1.200 1.500 1.200 1.200-.800 1h-1.400m3.800-2.800v2.800m0-.700h2.400m0-2.100v2.500h1.300M67.7 315.5h2.200l-1.200 1.500 1.200 1.200-.800 1h-1.400m3.800-2.800v2.800m0-.700h2.400m0-2.100v2.500h1.300M81.8 315.5h2.200l-1.200 1.500 1.200 1.200-.800 1h-1.400m3.800-2.800v2.800m0-.700h2.400m0-2.100v2.500h1.300M95.9 315.5h2.200l-1.200 1.500 1.200 1.200-.800 1h-1.400m3.800-2.800v2.800m0-.700h2.400m0-2.100v2.500h1.300M603.1 315.5h2.200l-1.200 1.500 1.200 1.200-.800 1h-1.400m3.800-2.800v2.800m0-.700h2.400m0-2.100v2.500h1.300M617.2 315.5h2.200l-1.200 1.500 1.200 1.200-.800 1h-1.400m3.800-2.800v2.800m0-.700h2.400m0-2.100v2.500h1.300M631.3 315.5h2.200l-1.200 1.500 1.200 1.200-.800 1h-1.400m3.800-2.800v2.800m0-.700h2.400m0-2.100v2.500h1.300M645.4 315.5h2.200l-1.200 1.500 1.200 1.200-.800 1h-1.400m3.800-2.800v2.800m0-.700h2.400m0-2.100v2.500h1.300M659.5 315.5h2.200l-1.200 1.500 1.200 1.200-.800 1h-1.400m3.800-2.800v2.800m0-.700h2.400m0-2.100v2.500h1.300M673.5 315.5h2.200l-1.200 1.500 1.200 1.200-.800 1h-1.400m3.800-2.800v2.800m0-.700h2.400m0-2.100v2.500h1.300M687.9 315.5h2.200l-1.200 1.500 1.200 1.200-.800 1h-1.400m3.800-2.800v2.800m0-.700h2.400m0-2.100v2.500h1.300M702 315.5h2.200l-1.200 1.500 1.200 1.200-.800 1h-1.400m3.800-2.800v2.800m0-.700h2.400m0-2.100v2.500h1.300M716.2 315.5h2.200l-1.200 1.500 1.200 1.200-.800 1h-1.400m3.800-2.800v2.800m0-.700h2.400m0-2.100v2.500h1.300M730.3 315.5h2.200l-1.200 1.500 1.200 1.200-.800 1h-1.400m3.800-2.800v2.800m0-.700h2.400m0-2.100v2.500h1.300M914.1 315.5h2.200l-1.200 1.500 1.200 1.200-.800 1h-1.400m3.800-2.800v2.800m0-.700h2.400m0-2.100v2.500h1.300M39.5 330.1h2.200l-1.200 1.500 1.200 1.200-.800 1h-1.400m3.800-2.800v2.800m0-.700h2.400m0-2.100v2.500h1.300M53.6 330.1h2.200l-1.200 1.500 1.200 1.200-.800 1h-1.400m3.800-2.800v2.800m0-.700h2.400m0-2.100v2.500h1.300M67.7 330.1h2.200l-1.200 1.500 1.200 1.200-.800 1h-1.400m3.800-2.800v2.800m0-.700h2.400m0-2.100v2.500h1.300M81.8 330.1h2.200l-1.200 1.500 1.200 1.200-.800 1h-1.400m3.800-2.800v2.800m0-.700h2.400m0-2.100v2.500h1.300M617.2 330.1h2.200l-1.200 1.500 1.200 1.200-.800 1h-1.400m3.800-2.800v2.800m0-.700h2.400m0-2.100v2.500h1.300M631.3 330.1h2.200l-1.200 1.500 1.200 1.200-.800 1h-1.400m3.800-2.800v2.800m0-.700h2.400m0-2.100v2.500h1.300M645.4 330.1h2.200l-1.200 1.500 1.200 1.200-.800 1h-1.400m3.800-2.800v2.800m0-.700h2.400m0-2.100v2.500h1.300M659.5 330.1h2.200l-1.200 1.500 1.200 1.200-.800 1h-1.400m3.800-2.800v2.800m0-.700h2.400m0-2.100v2.500h1.300M673.5 330.1h2.200l-1.200 1.500 1.200 1.200-.800 1h-1.400m3.800-2.800v2.800m0-.700h2.400m0-2.100v2.500h1.300M687.9 330.1h2.200l-1.200 1.500 1.200 1.200-.800 1h-1.400m3.800-2.800v2.800m0-.700h2.400m0-2.100v2.500h1.300M702 330.1h2.200l-1.200 1.500 1.200 1.200-.800 1h-1.400m3.800-2.800v2.800m0-.700h2.400m0-2.100v2.500h1.300M716.2 330.1h2.200l-1.200 1.500 1.200 1.200-.800 1h-1.400m3.800-2.800v2.800m0-.700h2.400m0-2.100v2.500h1.300M730.3 330.1h2.200l-1.200 1.500 1.200 1.200-.800 1h-1.400m3.800-2.800v2.800m0-.700h2.400m0-2.100v2.500h1.300M914.1 330.1h2.200l-1.200 1.500 1.200 1.200-.800 1h-1.400m3.800-2.800v2.800m0-.700h2.400m0-2.100v2.500h1.300M39.5 344.7h2.200l-1.200 1.500 1.200 1.200-.800 1h-1.400m3.800-2.800v2.800m0-.700h2.400m0-2.100v2.500h1.300M53.6 344.7h2.200l-1.200 1.500 1.200 1.200-.800 1h-1.400m3.800-2.800v2.800m0-.700h2.400m0-2.100v2.500h1.300M67.7 344.7h2.200l-1.200 1.500 1.200 1.200-.800 1h-1.400m3.800-2.800v2.800m0-.700h2.400m0-2.100v2.500h1.300M631.3 344.7h2.200l-1.200 1.500 1.200 1.200-.800 1h-1.400m3.800-2.800v2.800m0-.700h2.400m0-2.100v2.500h1.300M645.4 344.7h2.200l-1.200 1.500 1.200 1.200-.800 1h-1.400m3.800-2.800v2.800m0-.700h2.400m0-2.100v2.500h1.300M659.5 344.7h2.200l-1.200 1.500 1.200 1.200-.800 1h-1.400m3.800-2.800v2.800m0-.700h2.400m0-2.100v2.500h1.300M673.5 344.7h2.200l-1.200 1.500 1.200 1.200-.800 1h-1.400m3.800-2.800v2.800m0-.700h2.400m0-2.100v2.500h1.300M687.9 344.7h2.200l-1.200 1.500 1.200 1.200-.800 1h-1.400m3.800-2.800v2.800m0-.700h2.400m0-2.100v2.500h1.300M702 344.7h2.200l-1.200 1.500 1.200 1.200-.800 1h-1.400m3.800-2.800v2.800m0-.700h2.400m0-2.100v2.500h1.300M716.2 344.7h2.200l-1.200 1.500 1.200 1.200-.800 1h-1.400m3.800-2.800v2.800m0-.700h2.400m0-2.100v2.500h1.300M730.3 344.7h2.200l-1.200 1.500 1.200 1.200-.800 1h-1.400m3.800-2.800v2.800m0-.700h2.400m0-2.100v2.500h1.300M914.1 344.7h2.200l-1.200 1.500 1.200 1.200-.800 1h-1.400m3.800-2.800v2.800m0-.700h2.400m0-2.100v2.500h1.300M39.5 359.3h2.200l-1.200 1.500 1.200 1.200-.800 1h-1.400m3.800-2.800v2.800m0-.700h2.400m0-2.100v2.500h1.300M53.6 359.3h2.200l-1.200 1.500 1.200 1.200-.800 1h-1.400m3.800-2.800v2.800m0-.700h2.400m0-2.100v2.500h1.300M645.4 359.3h2.200l-1.200 1.500 1.200 1.200-.800 1h-1.400m3.800-2.800v2.800m0-.700h2.400m0-2.100v2.500h1.300M659.5 359.3h2.200l-1.200 1.500 1.200 1.200-.800 1h-1.400m3.800-2.800v2.800m0-.700h2.400m0-2.100v2.500h1.300M673.5 359.3h2.200l-1.200 1.500 1.200 1.200-.800 1h-1.400m3.800-2.800v2.800m0-.700h2.400m0-2.100v2.500h1.300M687.9 359.3h2.200l-1.200 1.500 1.200 1.200-.800 1h-1.400m3.800-2.800v2.800m0-.700h2.400m0-2.100v2.500h1.300M702 359.3h2.200l-1.200 1.500 1.200 1.200-.800 1h-1.400m3.800-2.800v2.800m0-.700h2.400m0-2.100v2.500h1.300M716.2 359.3h2.200l-1.200 1.500 1.200 1.200-.800 1h-1.400m3.800-2.800v2.800m0-.700h2.400m0-2.100v2.500h1.300M730.3 359.3h2.200l-1.200 1.500 1.200 1.200-.800 1h-1.400m3.800-2.800v2.800m0-.700h2.400m0-2.100v2.500h1.300M914.1 359.3h2.200l-1.200 1.500 1.200 1.200-.800 1h-1.400m3.800-2.800v2.800m0-.700h2.400m0-2.100v2.500h1.300M39.5 374h2.200l-1.200 1.500 1.200 1.200-.800 1h-1.400m3.800-2.800v2.800m0-.700h2.400m0-2.100v2.500h1.300M53.6 374h2.200l-1.200 1.500 1.200 1.200-.800 1h-1.400m3.800-2.800v2.800m0-.700h2.400m0-2.100v2.500h1.300M631.3 374h2.200l-1.200 1.500 1.200 1.200-.800 1h-1.400m3.800-2.800v2.800m0-.700h2.400m0-2.100v2.500h1.300M645.4 374h2.200l-1.200 1.500 1.200 1.200-.800 1h-1.400m3.800-2.800v2.800m0-.700h2.400m0-2.100v2.500h1.300M659.5 374h2.200l-1.200 1.500 1.200 1.200-.800 1h-1.400m3.800-2.800v2.800m0-.700h2.400m0-2.100v2.500h1.300M673.5 374h2.200l-1.200 1.500 1.200 1.200-.800 1h-1.400m3.800-2.800v2.800m0-.700h2.400m0-2.100v2.500h1.300M687.9 374h2.200l-1.200 1.500 1.200 1.200-.800 1h-1.400m3.800-2.800v2.800m0-.700h2.400m0-2.100v2.500h1.300M702 374h2.200l-1.200 1.500 1.200 1.200-.800 1h-1.400m3.800-2.800v2.800m0-.700h2.400m0-2.100v2.500h1.300M716.2 374h2.200l-1.200 1.500 1.200 1.200-.800 1h-1.400m3.800-2.800v2.800m0-.700h2.400m0-2.100v2.500h1.300M730.3 374h2.200l-1.200 1.500 1.200 1.200-.800 1h-1.400m3.800-2.800v2.800m0-.700h2.400m0-2.100v2.500h1.300M744.5 374h2.200l-1.200 1.500 1.200 1.200-.800 1h-1.400m3.800-2.800v2.800m0-.700h2.400m0-2.100v2.500h1.300M914.1 374h2.200l-1.200 1.500 1.200 1.200-.800 1h-1.400m3.800-2.800v2.800m0-.700h2.400m0-2.100v2.500h1.300M39.5 388.6h2.200l-1.200 1.500 1.200 1.200-.800 1h-1.400m3.800-2.800v2.800m0-.700h2.400m0-2.100v2.500h1.300M53.6 388.6h2.200l-1.200 1.500 1.200 1.200-.800 1h-1.400m3.800-2.800v2.800m0-.700h2.400m0-2.100v2.500h1.300M631.3 388.6h2.200l-1.200 1.500 1.200 1.200-.800 1h-1.400m3.800-2.800v2.800m0-.700h2.400m0-2.100v2.500h1.300M645.4 388.6h2.200l-1.200 1.500 1.200 1.200-.800 1h-1.400m3.800-2.800v2.800m0-.700h2.400m0-2.100v2.500h1.300M659.5 388.6h2.200l-1.200 1.500 1.200 1.200-.800 1h-1.400m3.800-2.800v2.800m0-.700h2.400m0-2.100v2.500h1.300M673.5 388.6h2.200l-1.200 1.500 1.200 1.200-.800 1h-1.400m3.800-2.800v2.800m0-.700h2.400m0-2.100v2.500h1.300M687.9 388.6h2.200l-1.200 1.500 1.200 1.200-.800 1h-1.400m3.800-2.800v2.800m0-.700h2.400m0-2.100v2.500h1.300M702 388.6h2.200l-1.200 1.500 1.200 1.200-.800 1h-1.400m3.800-2.800v2.800m0-.700h2.400m0-2.100v2.500h1.300M716.2 388.6h2.200l-1.200 1.500 1.200 1.200-.800 1h-1.400m3.800-2.800v2.800m0-.700h2.400m0-2.100v2.500h1.300M730.3 388.6h2.200l-1.200 1.500 1.200 1.200-.800 1h-1.400m3.800-2.800v2.800m0-.700h2.400m0-2.100v2.500h1.300M744.5 388.6h2.200l-1.200 1.500 1.200 1.200-.800 1h-1.400m3.800-2.800v2.800m0-.700h2.400m0-2.100v2.500h1.300M914.1 388.6h2.200l-1.200 1.500 1.200 1.200-.800 1h-1.400m3.800-2.800v2.800m0-.700h2.400m0-2.100v2.500h1.300M39.5 403.2h2.200l-1.200 1.500 1.200 1.200-.800 1h-1.400m3.800-2.800v2.800m0-.700h2.400m0-2.100v2.500h1.300M53.6 403.2h2.200l-1.200 1.500 1.200 1.200-.800 1h-1.400m3.800-2.800v2.800m0-.700h2.400m0-2.100v2.500h1.300M67.7 403.2h2.200l-1.200 1.500 1.200 1.200-.800 1h-1.400m3.800-2.800v2.800m0-.700h2.400m0-2.100v2.500h1.300M617.2 403.2h2.200l-1.200 1.500 1.200 1.200-.800 1h-1.400m3.800-2.800v2.800m0-.700h2.400m0-2.100v2.500h1.300M631.3 403.2h2.200l-1.200 1.500 1.200 1.200-.800 1h-1.400m3.800-2.800v2.800m0-.700h2.400m0-2.100v2.500h1.300M645.4 403.2h2.200l-1.200 1.500 1.200 1.200-.800 1h-1.400m3.800-2.800v2.800m0-.700h2.400m0-2.100v2.500h1.300M659.5 403.2h2.200l-1.200 1.500 1.200 1.200-.800 1h-1.400m3.800-2.800v2.800m0-.700h2.400m0-2.100v2.500h1.300M673.5 403.2h2.200l-1.200 1.500 1.200 1.200-.800 1h-1.400m3.800-2.800v2.800m0-.700h2.400m0-2.100v2.500h1.300M687.9 403.2h2.200l-1.200 1.500 1.200 1.200-.800 1h-1.400m3.800-2.800v2.800m0-.700h2.400m0-2.100v2.500h1.300M702 403.2h2.200l-1.200 1.500 1.200 1.200-.800 1h-1.400m3.800-2.800v2.800m0-.700h2.400m0-2.100v2.500h1.300M716.2 403.2h2.200l-1.200 1.500 1.200 1.200-.800 1h-1.400m3.800-2.800v2.800m0-.700h2.400m0-2.100v2.500h1.300M730.3 403.2h2.200l-1.200 1.500 1.200 1.200-.800 1h-1.400m3.800-2.800v2.800m0-.700h2.400m0-2.100v2.500h1.300M744.5 403.2h2.200l-1.200 1.500 1.200 1.200-.800 1h-1.400m3.800-2.800v2.800m0-.700h2.400m0-2.100v2.500h1.300M914.1 403.2h2.200l-1.200 1.500 1.200 1.200-.800 1h-1.400m3.800-2.800v2.800m0-.700h2.400m0-2.100v2.500h1.300M39.5 417.8h2.200l-1.200 1.500 1.200 1.200-.800 1h-1.400m3.800-2.800v2.800m0-.700h2.400m0-2.100v2.500h1.300M53.6 417.8h2.200l-1.200 1.500 1.200 1.200-.800 1h-1.400m3.800-2.800v2.800m0-.700h2.400m0-2.100v2.500h1.300M67.7 417.8h2.200l-1.200 1.500 1.200 1.200-.800 1h-1.400m3.800-2.800v2.800m0-.700h2.400m0-2.100v2.500h1.300M81.8 417.8h2.200l-1.200 1.500 1.200 1.200-.800 1h-1.400m3.800-2.800v2.800m0-.700h2.400m0-2.100v2.500h1.300M603.1 417.8h2.200l-1.200 1.500 1.200 1.200-.800 1h-1.400m3.800-2.800v2.800m0-.700h2.400m0-2.100v2.500h1.300M617.2 417.8h2.200l-1.200 1.500 1.200 1.200-.800 1h-1.400m3.800-2.800v2.800m0-.700h2.400m0-2.100v2.500h1.300M631.3 417.8h2.200l-1.200 1.500 1.200 1.200-.800 1h-1.400m3.800-2.800v2.800m0-.700h2.400m0-2.100v2.500h1.300M645.4 417.8h2.200l-1.200 1.500 1.200 1.200-.800 1h-1.400m3.800-2.800v2.800m0-.700h2.400m0-2.100v2.500h1.300M659.5 417.8h2.200l-1.200 1.500 1.200 1.200-.800 1h-1.400m3.800-2.800v2.800m0-.700h2.400m0-2.100v2.500h1.300M673.5 417.8h2.200l-1.200 1.500 1.200 1.200-.800 1h-1.400m3.800-2.800v2.800m0-.700h2.400m0-2.100v2.500h1.300M687.9 417.8h2.200l-1.200 1.500 1.200 1.200-.800 1h-1.400m3.800-2.800v2.800m0-.700h2.400m0-2.100v2.500h1.300M702 417.8h2.200l-1.200 1.500 1.200 1.200-.800 1h-1.400m3.800-2.800v2.800m0-.700h2.400m0-2.100v2.500h1.300M716.2 417.8h2.200l-1.200 1.500 1.200 1.200-.800 1h-1.400m3.800-2.800v2.800m0-.700h2.400m0-2.100v2.500h1.300M730.3 417.8h2.200l-1.200 1.500 1.200 1.200-.800 1h-1.400m3.800-2.800v2.800m0-.700h2.400m0-2.100v2.500h1.300M744.5 417.8h2.200l-1.200 1.500 1.200 1.200-.800 1h-1.400m3.800-2.800v2.800m0-.700h2.400m0-2.100v2.500h1.300M914.1 417.8h2.200l-1.200 1.500 1.200 1.200-.800 1h-1.400m3.800-2.800v2.800m0-.700h2.400m0-2.100v2.500h1.300M39.5 432.4h2.200l-1.200 1.500 1.200 1.200-.800 1h-1.400m3.800-2.800v2.800m0-.700h2.400m0-2.100v2.500h1.300M53.6 432.4h2.200l-1.200 1.500 1.200 1.200-.800 1h-1.400m3.800-2.800v2.800m0-.700h2.400m0-2.100v2.500h1.300M67.7 432.4h2.200l-1.200 1.500 1.200 1.200-.800 1h-1.400m3.800-2.800v2.800m0-.700h2.400m0-2.100v2.500h1.300M81.8 432.4h2.200l-1.200 1.500 1.200 1.200-.800 1h-1.400m3.800-2.800v2.800m0-.700h2.400m0-2.100v2.500h1.300M95.9 432.4h2.200l-1.200 1.500 1.200 1.200-.800 1h-1.400m3.800-2.800v2.800m0-.700h2.400m0-2.100v2.500h1.300M110 432.4h2.200l-1.200 1.500 1.200 1.200-.800 1h-1.400m3.800-2.800v2.800m0-.700h2.400m0-2.100v2.500h1.300M307.2 432.4h2.200l-1.200 1.500 1.200 1.200-.800 1h-1.400m3.800-2.800v2.800m0-.700h2.400m0-2.100v2.500h1.300M321.3 432.4h2.200l-1.200 1.500 1.200 1.200-.800 1h-1.400m3.800-2.800v2.800m0-.700h2.400m0-2.100v2.500h1.300M335.4 432.4h2.200l-1.200 1.500 1.200 1.200-.800 1h-1.400m3.800-2.800v2.800m0-.700h2.400m0-2.100v2.500h1.300M349.5 432.4h2.200l-1.200 1.500 1.200 1.200-.800 1h-1.400m3.800-2.800v2.800m0-.700h2.400m0-2.100v2.500h1.300M363.6 432.4h2.200l-1.200 1.500 1.200 1.200-.800 1h-1.400m3.800-2.800v2.800m0-.700h2.400m0-2.100v2.500h1.300M377.7 432.4h2.200l-1.200 1.500 1.200 1.200-.800 1h-1.400m3.800-2.800v2.800m0-.700h2.400m0-2.100v2.500h1.300M391.8 432.4h2.200l-1.200 1.500 1.200 1.200-.800 1h-1.400m3.800-2.800v2.800m0-.700h2.400m0-2.100v2.500h1.300M405.8 432.4h2.200l-1.200 1.500 1.200 1.200-.800 1h-1.400m3.800-2.800v2.800m0-.700h2.400m0-2.100v2.500h1.300M546.7 432.4h2.200l-1.200 1.500 1.200 1.200-.800 1h-1.400m3.800-2.800v2.800m0-.700h2.400m0-2.100v2.500h1.300M560.8 432.4h2.200l-1.200 1.500 1.200 1.200-.800 1h-1.400m3.800-2.800v2.800m0-.700h2.400m0-2.100v2.500h1.300M574.9 432.4h2.200l-1.200 1.500 1.200 1.200-.800 1h-1.400m3.800-2.800v2.800m0-.700h2.400m0-2.100v2.500h1.300M589 432.4h2.200l-1.200 1.500 1.200 1.200-.800 1h-1.400m3.800-2.800v2.800m0-.700h2.400m0-2.100v2.500h1.300M603.1 432.4h2.200l-1.200 1.500 1.200 1.200-.800 1h-1.400m3.800-2.800v2.800m0-.700h2.400m0-2.100v2.500h1.300M617.2 432.4h2.200l-1.200 1.500 1.200 1.200-.800 1h-1.400m3.800-2.800v2.800m0-.700h2.400m0-2.100v2.500h1.300M631.3 432.4h2.200l-1.200 1.500 1.200 1.200-.800 1h-1.400m3.800-2.800v2.800m0-.700h2.400m0-2.100v2.500h1.300M645.4 432.4h2.200l-1.200 1.500 1.200 1.200-.800 1h-1.400m3.800-2.800v2.800m0-.700h2.400m0-2.100v2.500h1.300M659.5 432.4h2.200l-1.200 1.500 1.200 1.200-.800 1h-1.400m3.800-2.800v2.800m0-.700h2.400m0-2.100v2.500h1.300M673.5 432.4h2.200l-1.200 1.500 1.200 1.200-.800 1h-1.400m3.800-2.800v2.800m0-.700h2.400m0-2.100v2.500h1.300M687.9 432.4h2.200l-1.200 1.500 1.200 1.200-.800 1h-1.400m3.800-2.800v2.800m0-.700h2.400m0-2.100v2.500h1.300M702 432.4h2.200l-1.200 1.500 1.200 1.200-.800 1h-1.400m3.800-2.800v2.800m0-.700h2.400m0-2.100v2.500h1.300M716.2 432.4h2.200l-1.200 1.500 1.200 1.200-.800 1h-1.400m3.800-2.800v2.800m0-.700h2.400m0-2.100v2.500h1.300M730.3 432.4h2.200l-1.200 1.500 1.200 1.200-.800 1h-1.400m3.800-2.800v2.800m0-.700h2.400m0-2.100v2.500h1.300M744.5 432.4h2.200l-1.200 1.500 1.200 1.200-.800 1h-1.400m3.800-2.800v2.800m0-.700h2.400m0-2.100v2.500h1.300M914.1 432.4h2.200l-1.200 1.500 1.200 1.200-.800 1h-1.400m3.800-2.800v2.800m0-.700h2.400m0-2.100v2.500h1.300M39.5 447h2.200l-1.200 1.500 1.200 1.200-.800 1h-1.400m3.800-2.800v2.800m0-.700h2.400m0-2.100v2.500h1.300M53.6 447h2.200l-1.200 1.500 1.200 1.200-.800 1h-1.400m3.800-2.800v2.800m0-.700h2.400m0-2.100v2.500h1.300M67.7 447h2.200l-1.200 1.500 1.200 1.200-.800 1h-1.400m3.800-2.800v2.800m0-.700h2.400m0-2.100v2.500h1.300M81.8 447h2.200l-1.200 1.500 1.200 1.200-.800 1h-1.400m3.800-2.800v2.800m0-.700h2.400m0-2.100v2.500h1.300M95.9 447h2.200l-1.200 1.500 1.200 1.200-.800 1h-1.400m3.800-2.800v2.800m0-.700h2.400m0-2.100v2.500h1.300M110 447h2.200l-1.200 1.500 1.200 1.200-.800 1h-1.400m3.800-2.800v2.800m0-.700h2.400m0-2.100v2.500h1.300M124 447h2.200l-1.200 1.500 1.200 1.200-.800 1h-1.400m3.800-2.800v2.800m0-.700h2.400m0-2.100v2.500h1.300M293.1 447h2.200l-1.200 1.500 1.200 1.200-.800 1h-1.400m3.800-2.800v2.800m0-.700h2.400m0-2.100v2.500h1.300M307.2 447h2.200l-1.200 1.500 1.200 1.200-.800 1h-1.400m3.800-2.800v2.800m0-.700h2.400m0-2.100v2.500h1.300M321.3 447h2.200l-1.200 1.500 1.200 1.200-.800 1h-1.400m3.800-2.800v2.800m0-.700h2.400m0-2.100v2.500h1.300M335.4 447h2.200l-1.200 1.500 1.200 1.200-.800 1h-1.400m3.800-2.800v2.800m0-.700h2.400m0-2.100v2.500h1.300M349.5 447h2.200l-1.200 1.500 1.200 1.200-.800 1h-1.400m3.800-2.800v2.800m0-.700h2.400m0-2.100v2.500h1.300M363.6 447h2.200l-1.200 1.500 1.200 1.200-.800 1h-1.400m3.800-2.800v2.800m0-.700h2.400m0-2.100v2.500h1.300M377.7 447h2.200l-1.200 1.500 1.200 1.200-.800 1h-1.400m3.800-2.800v2.800m0-.700h2.400m0-2.100v2.500h1.300M391.8 447h2.200l-1.200 1.500 1.200 1.200-.800 1h-1.400m3.800-2.800v2.800m0-.700h2.400m0-2.100v2.500h1.300M405.8 447h2.200l-1.200 1.500 1.200 1.200-.800 1h-1.400m3.800-2.800v2.800m0-.700h2.400m0-2.100v2.500h1.300M419.9 447h2.200l-1.200 1.500 1.200 1.200-.800 1h-1.400m3.800-2.800v2.800m0-.700h2.400m0-2.100v2.500h1.300M434 447h2.200l-1.200 1.500 1.200 1.200-.800 1h-1.400m3.800-2.800v2.800m0-.700h2.400m0-2.100v2.500h1.300M448.1 447h2.200l-1.200 1.500 1.200 1.200-.800 1h-1.400m3.800-2.800v2.800m0-.700h2.400m0-2.100v2.500h1.300M462.2 447h2.200l-1.200 1.500 1.200 1.200-.800 1h-1.400m3.800-2.800v2.800m0-.700h2.400m0-2.100v2.500h1.300M476.3 447h2.200l-1.200 1.500 1.200 1.200-.800 1h-1.400m3.800-2.800v2.800m0-.700h2.400m0-2.100v2.500h1.300M490.4 447h2.200l-1.200 1.500 1.200 1.200-.800 1h-1.400m3.800-2.800v2.800m0-.700h2.400m0-2.100v2.500h1.300M504.5 447h2.200l-1.200 1.500 1.200 1.200-.800 1h-1.400m3.800-2.800v2.800m0-.700h2.400m0-2.100v2.500h1.300M518.6 447h2.200l-1.200 1.500 1.200 1.200-.800 1h-1.400m3.800-2.800v2.800m0-.700h2.400m0-2.100v2.500h1.300M532.6 447h2.200l-1.200 1.500 1.200 1.200-.800 1h-1.400m3.800-2.800v2.800m0-.700h2.400m0-2.100v2.500h1.300M546.7 447h2.200l-1.200 1.500 1.200 1.200-.800 1h-1.400m3.800-2.800v2.800m0-.700h2.400m0-2.100v2.500h1.300M560.8 447h2.200l-1.200 1.500 1.200 1.200-.800 1h-1.400m3.800-2.800v2.800m0-.700h2.400m0-2.100v2.500h1.300M574.9 447h2.200l-1.200 1.500 1.200 1.200-.800 1h-1.400m3.800-2.800v2.800m0-.700h2.400m0-2.100v2.500h1.300M589 447h2.200l-1.200 1.500 1.200 1.200-.800 1h-1.400m3.800-2.800v2.800m0-.700h2.400m0-2.100v2.500h1.300M603.1 447h2.200l-1.200 1.500 1.200 1.200-.800 1h-1.400m3.800-2.800v2.800m0-.700h2.400m0-2.100v2.500h1.300M617.2 447h2.200l-1.200 1.500 1.200 1.200-.800 1h-1.400m3.800-2.800v2.800m0-.700h2.400m0-2.100v2.500h1.300M631.3 447h2.200l-1.200 1.500 1.200 1.200-.800 1h-1.400m3.800-2.800v2.800m0-.700h2.400m0-2.100v2.500h1.300M645.4 447h2.200l-1.200 1.500 1.200 1.200-.800 1h-1.400m3.800-2.800v2.800m0-.700h2.400m0-2.100v2.500h1.300M659.5 447h2.200l-1.200 1.500 1.200 1.200-.800 1h-1.400m3.800-2.800v2.800m0-.700h2.400m0-2.100v2.500h1.300M673.5 447h2.200l-1.200 1.500 1.200 1.200-.800 1h-1.400m3.800-2.800v2.800m0-.700h2.400m0-2.100v2.500h1.300M687.9 447h2.200l-1.200 1.500 1.200 1.200-.800 1h-1.400m3.800-2.800v2.800m0-.700h2.400m0-2.100v2.500h1.300M702 447h2.200l-1.200 1.500 1.200 1.200-.800 1h-1.400m3.800-2.800v2.800m0-.700h2.400m0-2.100v2.500h1.300M716.2 447h2.200l-1.200 1.500 1.200 1.200-.800 1h-1.400m3.800-2.800v2.800m0-.700h2.400m0-2.100v2.500h1.300M730.3 447h2.200l-1.200 1.500 1.200 1.200-.800 1h-1.400m3.800-2.800v2.800m0-.700h2.400m0-2.100v2.500h1.300M744.5 447h2.200l-1.200 1.500 1.200 1.200-.800 1h-1.400m3.800-2.800v2.800m0-.700h2.400m0-2.100v2.500h1.300M914.1 447h2.200l-1.200 1.500 1.200 1.200-.800 1h-1.400m3.800-2.800v2.800m0-.700h2.400m0-2.100v2.500h1.300M39.5 461.6h2.200l-1.200 1.500 1.200 1.200-.800 1h-1.400m3.800-2.800v2.800m0-.700h2.400m0-2.100v2.500h1.300M53.6 461.6h2.200l-1.200 1.500 1.200 1.200-.800 1h-1.400m3.800-2.800v2.800m0-.700h2.400m0-2.100v2.500h1.300M67.7 461.6h2.200l-1.200 1.500 1.200 1.200-.800 1h-1.400m3.800-2.800v2.800m0-.700h2.400m0-2.100v2.500h1.300M81.8 461.6h2.200l-1.200 1.500 1.200 1.200-.800 1h-1.400m3.800-2.800v2.800m0-.700h2.400m0-2.100v2.500h1.300M95.9 461.6h2.200l-1.200 1.500 1.200 1.200-.800 1h-1.400m3.800-2.800v2.800m0-.700h2.400m0-2.100v2.500h1.300M110 461.6h2.200l-1.200 1.500 1.200 1.200-.800 1h-1.400m3.800-2.800v2.800m0-.700h2.400m0-2.100v2.500h1.300M124 461.6h2.200l-1.200 1.500 1.200 1.200-.800 1h-1.400m3.800-2.800v2.800m0-.700h2.400m0-2.100v2.500h1.300M279 461.6h2.200l-1.200 1.500 1.200 1.200-.800 1h-1.400m3.800-2.800v2.800m0-.700h2.400m0-2.100v2.500h1.300M293.1 461.6h2.200l-1.200 1.500 1.200 1.200-.800 1h-1.400m3.800-2.800v2.800m0-.700h2.400m0-2.100v2.500h1.300M307.2 461.6h2.200l-1.200 1.500 1.200 1.200-.800 1h-1.400m3.800-2.800v2.800m0-.700h2.400m0-2.100v2.500h1.300M321.3 461.6h2.200l-1.200 1.500 1.200 1.200-.800 1h-1.400m3.800-2.800v2.800m0-.700h2.400m0-2.100v2.500h1.300M335.4 461.6h2.200l-1.200 1.500 1.200 1.200-.800 1h-1.400m3.800-2.800v2.800m0-.700h2.400m0-2.100v2.500h1.300M349.5 461.6h2.200l-1.200 1.500 1.200 1.200-.800 1h-1.400m3.800-2.800v2.800m0-.700h2.400m0-2.100v2.500h1.300M363.6 461.6h2.200l-1.200 1.500 1.200 1.200-.800 1h-1.400m3.800-2.800v2.800m0-.700h2.400m0-2.100v2.500h1.300M377.7 461.6h2.200l-1.200 1.500 1.200 1.200-.800 1h-1.400m3.800-2.800v2.800m0-.700h2.400m0-2.100v2.500h1.300M391.8 461.6h2.200l-1.200 1.500 1.200 1.200-.800 1h-1.400m3.800-2.800v2.800m0-.700h2.400m0-2.100v2.500h1.300M405.8 461.6h2.200l-1.200 1.500 1.200 1.200-.800 1h-1.400m3.800-2.800v2.800m0-.700h2.400m0-2.100v2.500h1.300M419.9 461.6h2.200l-1.200 1.500 1.200 1.200-.800 1h-1.400m3.800-2.800v2.800m0-.700h2.400m0-2.100v2.500h1.300M434 461.6h2.200l-1.200 1.500 1.200 1.200-.800 1h-1.400m3.800-2.800v2.800m0-.700h2.400m0-2.100v2.500h1.300M448.1 461.6h2.200l-1.200 1.500 1.200 1.200-.800 1h-1.400m3.800-2.800v2.800m0-.700h2.400m0-2.100v2.500h1.300M462.2 461.6h2.200l-1.200 1.500 1.200 1.200-.800 1h-1.400m3.800-2.800v2.800m0-.700h2.400m0-2.100v2.500h1.300M476.3 461.6h2.200l-1.200 1.500 1.200 1.200-.800 1h-1.400m3.800-2.800v2.800m0-.700h2.400m0-2.100v2.500h1.300M490.4 461.6h2.200l-1.200 1.500 1.200 1.200-.800 1h-1.400m3.800-2.800v2.800m0-.700h2.400m0-2.100v2.500h1.300M504.5 461.6h2.200l-1.200 1.500 1.200 1.200-.800 1h-1.400m3.800-2.800v2.800m0-.700h2.400m0-2.100v2.500h1.300M518.6 461.6h2.200l-1.200 1.500 1.200 1.200-.800 1h-1.400m3.800-2.800v2.800m0-.700h2.400m0-2.100v2.500h1.300M532.6 461.6h2.200l-1.200 1.500 1.200 1.200-.800 1h-1.400m3.800-2.800v2.800m0-.700h2.400m0-2.100v2.500h1.300M546.7 461.6h2.200l-1.200 1.500 1.200 1.200-.800 1h-1.400m3.800-2.800v2.800m0-.700h2.400m0-2.100v2.500h1.300M560.8 461.6h2.200l-1.200 1.500 1.200 1.200-.800 1h-1.400m3.800-2.800v2.800m0-.700h2.400m0-2.100v2.500h1.300M574.9 461.6h2.200l-1.200 1.500 1.200 1.200-.800 1h-1.400m3.800-2.800v2.800m0-.700h2.400m0-2.100v2.500h1.300M589 461.6h2.200l-1.200 1.500 1.200 1.200-.800 1h-1.400m3.800-2.800v2.800m0-.700h2.400m0-2.100v2.500h1.300M603.1 461.6h2.200l-1.200 1.500 1.200 1.200-.800 1h-1.400m3.800-2.800v2.800m0-.700h2.400m0-2.100v2.500h1.300M617.2 461.6h2.200l-1.200 1.500 1.200 1.200-.800 1h-1.400m3.800-2.800v2.800m0-.700h2.400m0-2.100v2.500h1.300M631.3 461.6h2.200l-1.200 1.500 1.200 1.200-.800 1h-1.400m3.800-2.800v2.800m0-.700h2.400m0-2.100v2.500h1.300M645.4 461.6h2.200l-1.200 1.500 1.200 1.200-.800 1h-1.400m3.800-2.800v2.800m0-.700h2.400m0-2.100v2.500h1.300M659.5 461.6h2.200l-1.200 1.500 1.200 1.200-.800 1h-1.400m3.800-2.800v2.800m0-.700h2.400m0-2.100v2.500h1.300M673.5 461.6h2.200l-1.200 1.500 1.200 1.200-.800 1h-1.400m3.800-2.800v2.800m0-.700h2.400m0-2.100v2.500h1.300M687.9 461.6h2.200l-1.200 1.500 1.200 1.200-.800 1h-1.400m3.800-2.800v2.800m0-.700h2.400m0-2.100v2.500h1.300M702 461.6h2.200l-1.200 1.500 1.200 1.200-.800 1h-1.400m3.800-2.800v2.800m0-.700h2.400m0-2.100v2.500h1.300M716.2 461.6h2.200l-1.200 1.500 1.200 1.200-.800 1h-1.400m3.800-2.800v2.800m0-.700h2.400m0-2.100v2.500h1.300M730.3 461.6h2.200l-1.200 1.500 1.200 1.200-.800 1h-1.400m3.800-2.800v2.800m0-.700h2.400m0-2.100v2.500h1.300M744.5 461.6h2.200l-1.200 1.500 1.200 1.200-.800 1h-1.400m3.800-2.800v2.800m0-.700h2.400m0-2.100v2.500h1.300M914.1 461.6h2.200l-1.200 1.500 1.200 1.200-.800 1h-1.400m3.800-2.800v2.800m0-.700h2.400m0-2.100v2.500h1.300" fill="none" stroke="#20160c" stroke-width="1.250" opacity=".92"/>
<path d="M195.9 303.9h1m1.200-2.600v2.800m0-.700h2.400m0-2.100v2.500h1.300M210 303.9h1m1.200-2.600v2.800m0-.700h2.400m0-2.100v2.500h1.300M224.1 303.9h1m1.200-2.600v2.800m0-.700h2.400m0-2.100v2.500h1.300M238.2 303.9h1m1.200-2.600v2.800m0-.700h2.400m0-2.100v2.500h1.300M308.6 303.9h1m1.200-2.600v2.800m0-.700h2.400m0-2.100v2.500h1.300M322.7 303.9h1m1.200-2.600v2.800m0-.700h2.400m0-2.100v2.500h1.300M336.8 303.9h1m1.200-2.600v2.800m0-.700h2.400m0-2.100v2.500h1.300M350.9 303.9h1m1.200-2.600v2.800m0-.700h2.400m0-2.100v2.500h1.300M365 303.9h1m1.200-2.600v2.800m0-.700h2.400m0-2.100v2.500h1.300M379.1 303.9h1m1.200-2.600v2.800m0-.700h2.400m0-2.100v2.500h1.300M393.2 303.9h1m1.200-2.600v2.800m0-.700h2.400m0-2.100v2.500h1.300M407.2 303.9h1m1.200-2.600v2.800m0-.700h2.400m0-2.100v2.500h1.300M421.3 303.9h1m1.200-2.600v2.800m0-.700h2.400m0-2.100v2.500h1.300M111.4 318.5h1m1.200-2.600v2.800m0-.700h2.400m0-2.100v2.500h1.300M125.4 318.5h1m1.200-2.600v2.800m0-.700h2.400m0-2.100v2.500h1.300M139.5 318.5h1m1.200-2.600v2.800m0-.700h2.400m0-2.100v2.500h1.300M153.6 318.5h1m1.200-2.600v2.800m0-.700h2.400m0-2.100v2.500h1.300M463.6 318.5h1m1.200-2.600v2.800m0-.700h2.400m0-2.100v2.500h1.300M477.7 318.5h1m1.200-2.600v2.800m0-.700h2.400m0-2.100v2.500h1.300M491.8 318.5h1m1.200-2.600v2.800m0-.700h2.400m0-2.100v2.500h1.300M505.9 318.5h1m1.200-2.600v2.800m0-.700h2.400m0-2.100v2.500h1.300M520 318.5h1m1.200-2.600v2.800m0-.700h2.400m0-2.100v2.500h1.300M534 318.5h1m1.200-2.600v2.800m0-.700h2.400m0-2.100v2.500h1.300M548.1 318.5h1m1.200-2.600v2.800m0-.700h2.400m0-2.100v2.500h1.300M562.2 318.5h1m1.200-2.600v2.800m0-.700h2.400m0-2.100v2.500h1.300M576.3 318.5h1m1.200-2.600v2.800m0-.700h2.400m0-2.100v2.500h1.300M590.4 318.5h1m1.200-2.600v2.800m0-.700h2.400m0-2.100v2.500h1.300M97.3 333.1h1m1.200-2.600v2.800m0-.700h2.400m0-2.100v2.500h1.300M576.3 333.1h1m1.200-2.600v2.800m0-.700h2.400m0-2.100v2.500h1.300M590.4 333.1h1m1.200-2.600v2.800m0-.700h2.400m0-2.100v2.500h1.300M604.5 333.1h1m1.200-2.600v2.800m0-.700h2.400m0-2.100v2.500h1.300M83.2 347.7h1m1.200-2.600v2.800m0-.700h2.400m0-2.100v2.500h1.300M604.5 347.7h1m1.200-2.600v2.800m0-.700h2.400m0-2.100v2.500h1.300M618.6 347.7h1m1.200-2.600v2.800m0-.700h2.400m0-2.100v2.500h1.300M69.1 362.3h1m1.200-2.600v2.800m0-.700h2.400m0-2.100v2.500h1.300M618.6 362.3h1m1.200-2.600v2.800m0-.700h2.400m0-2.100v2.500h1.300M632.7 362.3h1m1.200-2.600v2.800m0-.700h2.400m0-2.100v2.500h1.300M69.1 377h1m1.200-2.600v2.800m0-.700h2.400m0-2.100v2.500h1.300M618.6 377h1m1.200-2.600v2.800m0-.700h2.400m0-2.100v2.500h1.300M69.1 391.6h1m1.200-2.600v2.800m0-.700h2.400m0-2.100v2.500h1.300M604.5 391.6h1m1.200-2.600v2.800m0-.700h2.400m0-2.100v2.500h1.300M618.6 391.6h1m1.200-2.600v2.800m0-.700h2.400m0-2.100v2.500h1.300M576.3 406.2h1m1.200-2.600v2.800m0-.700h2.400m0-2.100v2.500h1.300M590.4 406.2h1m1.200-2.600v2.800m0-.700h2.400m0-2.100v2.500h1.300M604.5 406.2h1m1.200-2.600v2.800m0-.700h2.400m0-2.100v2.500h1.300M336.8 420.8h1m1.200-2.600v2.800m0-.700h2.400m0-2.100v2.500h1.300M350.9 420.8h1m1.200-2.600v2.800m0-.700h2.400m0-2.100v2.500h1.300M365 420.8h1m1.200-2.600v2.800m0-.700h2.400m0-2.100v2.500h1.300M379.1 420.8h1m1.200-2.600v2.800m0-.700h2.400m0-2.100v2.500h1.300M393.2 420.8h1m1.200-2.600v2.800m0-.700h2.400m0-2.100v2.500h1.300M407.2 420.8h1m1.200-2.600v2.800m0-.700h2.400m0-2.100v2.500h1.300M421.3 420.8h1m1.200-2.600v2.800m0-.700h2.400m0-2.100v2.500h1.300M435.4 420.8h1m1.200-2.600v2.800m0-.700h2.400m0-2.100v2.500h1.300M449.5 420.8h1m1.200-2.600v2.800m0-.700h2.400m0-2.100v2.500h1.300M463.6 420.8h1m1.200-2.600v2.800m0-.700h2.400m0-2.100v2.500h1.300M477.7 420.8h1m1.200-2.600v2.800m0-.700h2.400m0-2.100v2.500h1.300M491.8 420.8h1m1.200-2.600v2.800m0-.700h2.400m0-2.100v2.500h1.300M505.9 420.8h1m1.200-2.600v2.800m0-.700h2.400m0-2.100v2.500h1.300M520 420.8h1m1.200-2.600v2.800m0-.700h2.400m0-2.100v2.500h1.300M534 420.8h1m1.200-2.600v2.800m0-.700h2.400m0-2.100v2.500h1.300M548.1 420.8h1m1.200-2.600v2.800m0-.700h2.400m0-2.100v2.500h1.300M562.2 420.8h1m1.200-2.600v2.800m0-.700h2.400m0-2.100v2.500h1.300M576.3 420.8h1m1.200-2.600v2.800m0-.700h2.400m0-2.100v2.500h1.300M590.4 420.8h1m1.200-2.600v2.800m0-.700h2.400m0-2.100v2.500h1.300M421.3 435.4h1m1.200-2.600v2.800m0-.700h2.400m0-2.100v2.500h1.300M435.4 435.4h1m1.200-2.600v2.800m0-.700h2.400m0-2.100v2.500h1.300M449.5 435.4h1m1.200-2.600v2.800m0-.700h2.400m0-2.100v2.500h1.300M463.6 435.4h1m1.200-2.600v2.800m0-.700h2.400m0-2.100v2.500h1.300M477.7 435.4h1m1.200-2.600v2.800m0-.700h2.400m0-2.100v2.500h1.300M491.8 435.4h1m1.200-2.600v2.800m0-.700h2.400m0-2.100v2.500h1.300M505.9 435.4h1m1.200-2.600v2.800m0-.700h2.400m0-2.100v2.500h1.300M520 435.4h1m1.200-2.600v2.800m0-.700h2.400m0-2.100v2.500h1.300M534 435.4h1m1.200-2.600v2.800m0-.700h2.400m0-2.100v2.500h1.300" fill="none" stroke="#20160c" stroke-width="1.250" opacity=".92"/>
<path d="M758.6 271.6h2.200l-1.200 1.500 1.200 1.200-.800 1h-1.400M772.7 271.6h2.200l-1.200 1.500 1.200 1.200-.800 1h-1.400M786.9 271.6h2.200l-1.200 1.500 1.200 1.200-.800 1h-1.400M801 271.6h2.200l-1.200 1.500 1.200 1.200-.800 1h-1.400M815.2 271.6h2.200l-1.200 1.500 1.200 1.200-.800 1h-1.400M829.3 271.6h2.200l-1.200 1.500 1.200 1.200-.800 1h-1.400M843.4 271.6h2.200l-1.200 1.500 1.200 1.200-.800 1h-1.400M857.6 271.6h2.200l-1.200 1.500 1.200 1.200-.800 1h-1.400M871.7 271.6h2.200l-1.200 1.500 1.200 1.200-.800 1h-1.400M885.9 271.6h2.200l-1.200 1.500 1.200 1.200-.800 1h-1.400M900 271.6h2.200l-1.200 1.500 1.200 1.200-.800 1h-1.400M744.5 286.3h2.200l-1.200 1.500 1.200 1.200-.800 1h-1.400M758.6 286.3h2.200l-1.200 1.500 1.200 1.200-.800 1h-1.400M772.7 286.3h2.200l-1.200 1.500 1.200 1.200-.800 1h-1.400M786.9 286.3h2.200l-1.200 1.500 1.200 1.200-.800 1h-1.400M857.6 286.3h2.200l-1.200 1.500 1.200 1.200-.800 1h-1.400M871.7 286.3h2.200l-1.200 1.500 1.200 1.200-.800 1h-1.400M885.9 286.3h2.200l-1.200 1.500 1.200 1.200-.800 1h-1.400M900 286.3h2.200l-1.200 1.500 1.200 1.200-.800 1h-1.400M744.5 300.9h2.200l-1.200 1.500 1.200 1.200-.800 1h-1.400M758.6 300.9h2.200l-1.200 1.500 1.200 1.200-.800 1h-1.400M772.7 300.9h2.200l-1.200 1.500 1.200 1.200-.800 1h-1.400M885.9 300.9h2.200l-1.200 1.500 1.200 1.200-.800 1h-1.400M900 300.9h2.200l-1.200 1.500 1.200 1.200-.800 1h-1.400M744.5 315.5h2.200l-1.200 1.500 1.200 1.200-.800 1h-1.400M758.6 315.5h2.200l-1.200 1.500 1.200 1.200-.800 1h-1.400M900 315.5h2.200l-1.200 1.500 1.200 1.200-.800 1h-1.400M744.5 330.1h2.200l-1.200 1.500 1.200 1.200-.800 1h-1.400M758.6 330.1h2.200l-1.200 1.500 1.200 1.200-.800 1h-1.400M772.7 330.1h2.200l-1.200 1.500 1.200 1.200-.800 1h-1.400M900 330.1h2.200l-1.200 1.500 1.200 1.200-.800 1h-1.400M744.5 344.7h2.200l-1.200 1.500 1.200 1.200-.800 1h-1.400M758.6 344.7h2.200l-1.200 1.500 1.200 1.200-.800 1h-1.400M772.7 344.7h2.200l-1.200 1.500 1.200 1.200-.800 1h-1.400M900 344.7h2.200l-1.200 1.500 1.200 1.200-.800 1h-1.400M744.5 359.3h2.200l-1.200 1.500 1.200 1.200-.800 1h-1.400M758.6 359.3h2.200l-1.200 1.500 1.200 1.200-.800 1h-1.400M772.7 359.3h2.200l-1.200 1.500 1.200 1.200-.800 1h-1.400M900 359.3h2.200l-1.200 1.500 1.200 1.200-.800 1h-1.400M758.6 374h2.200l-1.200 1.500 1.200 1.200-.800 1h-1.400M900 374h2.200l-1.200 1.500 1.200 1.200-.800 1h-1.400M758.6 388.6h2.200l-1.200 1.500 1.200 1.200-.800 1h-1.400M772.7 388.6h2.200l-1.200 1.500 1.200 1.200-.800 1h-1.400M885.9 388.6h2.200l-1.200 1.500 1.200 1.200-.800 1h-1.400M900 388.6h2.200l-1.200 1.500 1.200 1.200-.800 1h-1.400M758.6 403.2h2.200l-1.200 1.500 1.200 1.200-.800 1h-1.400M772.7 403.2h2.200l-1.200 1.500 1.200 1.200-.800 1h-1.400M885.9 403.2h2.200l-1.200 1.500 1.200 1.200-.800 1h-1.400M900 403.2h2.200l-1.200 1.500 1.200 1.200-.800 1h-1.400M95.9 417.8h2.200l-1.200 1.500 1.200 1.200-.800 1h-1.400M758.6 417.8h2.200l-1.200 1.500 1.200 1.200-.800 1h-1.400M772.7 417.8h2.200l-1.200 1.500 1.200 1.200-.800 1h-1.400M786.9 417.8h2.200l-1.200 1.500 1.200 1.200-.800 1h-1.400M871.7 417.8h2.200l-1.200 1.500 1.200 1.200-.800 1h-1.400M885.9 417.8h2.200l-1.200 1.500 1.200 1.200-.800 1h-1.400M900 417.8h2.200l-1.200 1.500 1.200 1.200-.800 1h-1.400M124 432.4h2.200l-1.200 1.500 1.200 1.200-.800 1h-1.400M138.1 432.4h2.200l-1.200 1.500 1.200 1.200-.800 1h-1.400M152.2 432.4h2.200l-1.200 1.500 1.200 1.200-.800 1h-1.400M279 432.4h2.200l-1.200 1.500 1.200 1.200-.800 1h-1.400M293.1 432.4h2.200l-1.200 1.500 1.200 1.200-.800 1h-1.400M758.6 432.4h2.200l-1.200 1.500 1.200 1.200-.800 1h-1.400M772.7 432.4h2.200l-1.200 1.500 1.200 1.200-.800 1h-1.400M857.6 432.4h2.200l-1.200 1.500 1.200 1.200-.800 1h-1.400M871.7 432.4h2.200l-1.200 1.500 1.200 1.200-.800 1h-1.400M885.9 432.4h2.200l-1.200 1.500 1.200 1.200-.800 1h-1.400M900 432.4h2.200l-1.200 1.500 1.200 1.200-.800 1h-1.400M138.1 447h2.200l-1.200 1.500 1.200 1.200-.800 1h-1.400M152.2 447h2.200l-1.200 1.500 1.200 1.200-.800 1h-1.400M166.3 447h2.200l-1.200 1.500 1.200 1.200-.800 1h-1.400M180.4 447h2.200l-1.200 1.500 1.200 1.200-.800 1h-1.400M194.5 447h2.200l-1.200 1.500 1.200 1.200-.800 1h-1.400M208.6 447h2.200l-1.200 1.500 1.200 1.200-.800 1h-1.400M222.7 447h2.200l-1.200 1.500 1.200 1.200-.800 1h-1.400M236.8 447h2.200l-1.200 1.500 1.200 1.200-.800 1h-1.400M250.8 447h2.200l-1.200 1.500 1.200 1.200-.800 1h-1.400M264.9 447h2.200l-1.200 1.500 1.200 1.200-.800 1h-1.400M279 447h2.200l-1.200 1.500 1.200 1.200-.800 1h-1.400M758.6 447h2.200l-1.200 1.500 1.200 1.200-.800 1h-1.400M772.7 447h2.200l-1.200 1.500 1.200 1.200-.800 1h-1.400M786.9 447h2.200l-1.200 1.500 1.200 1.200-.800 1h-1.400M843.4 447h2.200l-1.200 1.500 1.200 1.200-.800 1h-1.400M857.6 447h2.200l-1.200 1.500 1.200 1.200-.800 1h-1.400M871.7 447h2.200l-1.200 1.500 1.200 1.200-.800 1h-1.400M885.9 447h2.200l-1.200 1.500 1.200 1.200-.800 1h-1.400M900 447h2.200l-1.200 1.500 1.200 1.200-.800 1h-1.400M138.1 461.6h2.200l-1.200 1.500 1.200 1.200-.800 1h-1.400M152.2 461.6h2.200l-1.200 1.500 1.200 1.200-.800 1h-1.400M166.3 461.6h2.200l-1.200 1.500 1.200 1.200-.800 1h-1.400M180.4 461.6h2.200l-1.200 1.500 1.200 1.200-.800 1h-1.400M194.5 461.6h2.200l-1.200 1.500 1.200 1.200-.800 1h-1.400M208.6 461.6h2.200l-1.200 1.500 1.200 1.200-.800 1h-1.400M222.7 461.6h2.200l-1.200 1.500 1.200 1.200-.800 1h-1.400M236.8 461.6h2.200l-1.200 1.500 1.200 1.200-.800 1h-1.400M250.8 461.6h2.200l-1.200 1.500 1.200 1.200-.800 1h-1.400M264.9 461.6h2.200l-1.200 1.500 1.200 1.200-.800 1h-1.400M758.6 461.6h2.200l-1.200 1.500 1.200 1.200-.800 1h-1.400M772.7 461.6h2.200l-1.200 1.500 1.200 1.200-.800 1h-1.400M786.9 461.6h2.200l-1.200 1.500 1.200 1.200-.800 1h-1.400M801 461.6h2.200l-1.200 1.500 1.200 1.200-.800 1h-1.400M815.2 461.6h2.200l-1.200 1.500 1.200 1.200-.800 1h-1.400M829.3 461.6h2.200l-1.200 1.500 1.200 1.200-.800 1h-1.400M843.4 461.6h2.200l-1.200 1.500 1.200 1.200-.800 1h-1.400M857.6 461.6h2.200l-1.200 1.500 1.200 1.200-.800 1h-1.400M871.7 461.6h2.200l-1.200 1.500 1.200 1.200-.800 1h-1.400M885.9 461.6h2.200l-1.200 1.500 1.200 1.200-.800 1h-1.400M900 461.6h2.200l-1.200 1.500 1.200 1.200-.800 1h-1.400" fill="none" stroke="#200404" stroke-width="1.150" opacity=".9"/>
<path d="M803.6 290.9h1M817.8 290.9h1M831.9 290.9h1M846 290.9h1M789.5 305.5h1M803.6 305.5h1M817.8 305.5h1M831.9 305.5h1M846 305.5h1M860.2 305.5h1M874.3 305.5h1M168.9 320.1h1M183 320.1h1M197.1 320.1h1M211.2 320.1h1M225.3 320.1h1M239.4 320.1h1M253.4 320.1h1M267.5 320.1h1M281.6 320.1h1M295.7 320.1h1M309.8 320.1h1M323.9 320.1h1M338 320.1h1M352.1 320.1h1M366.2 320.1h1M380.3 320.1h1M394.4 320.1h1M408.4 320.1h1M422.5 320.1h1M436.6 320.1h1M450.7 320.1h1M775.3 320.1h1M789.5 320.1h1M803.6 320.1h1M817.8 320.1h1M831.9 320.1h1M846 320.1h1M860.2 320.1h1M874.3 320.1h1M888.5 320.1h1M112.6 334.7h1M126.6 334.7h1M140.7 334.7h1M154.8 334.7h1M168.9 334.7h1M183 334.7h1M197.1 334.7h1M211.2 334.7h1M225.3 334.7h1M239.4 334.7h1M253.4 334.7h1M267.5 334.7h1M281.6 334.7h1M295.7 334.7h1M309.8 334.7h1M323.9 334.7h1M338 334.7h1M352.1 334.7h1M366.2 334.7h1M380.3 334.7h1M394.4 334.7h1M408.4 334.7h1M422.5 334.7h1M436.6 334.7h1M450.7 334.7h1M464.8 334.7h1M478.9 334.7h1M493 334.7h1M507.1 334.7h1M521.2 334.7h1M535.2 334.7h1M549.3 334.7h1M563.4 334.7h1M789.5 334.7h1M803.6 334.7h1M817.8 334.7h1M831.9 334.7h1M846 334.7h1M860.2 334.7h1M874.3 334.7h1M888.5 334.7h1M98.5 349.3h1M112.6 349.3h1M126.6 349.3h1M140.7 349.3h1M154.8 349.3h1M168.9 349.3h1M183 349.3h1M197.1 349.3h1M211.2 349.3h1M225.3 349.3h1M239.4 349.3h1M253.4 349.3h1M267.5 349.3h1M281.6 349.3h1M295.7 349.3h1M309.8 349.3h1M323.9 349.3h1M338 349.3h1M352.1 349.3h1M366.2 349.3h1M380.3 349.3h1M394.4 349.3h1M408.4 349.3h1M422.5 349.3h1M436.6 349.3h1M450.7 349.3h1M464.8 349.3h1M478.9 349.3h1M493 349.3h1M507.1 349.3h1M521.2 349.3h1M535.2 349.3h1M549.3 349.3h1M563.4 349.3h1M577.5 349.3h1M591.6 349.3h1M789.5 349.3h1M803.6 349.3h1M817.8 349.3h1M831.9 349.3h1M846 349.3h1M860.2 349.3h1M874.3 349.3h1M888.5 349.3h1M84.4 363.9h1M98.5 363.9h1M112.6 363.9h1M126.6 363.9h1M140.7 363.9h1M154.8 363.9h1M168.9 363.9h1M183 363.9h1M197.1 363.9h1M211.2 363.9h1M225.3 363.9h1M239.4 363.9h1M253.4 363.9h1M267.5 363.9h1M281.6 363.9h1M295.7 363.9h1M309.8 363.9h1M323.9 363.9h1M338 363.9h1M352.1 363.9h1M366.2 363.9h1M380.3 363.9h1M394.4 363.9h1M408.4 363.9h1M422.5 363.9h1M436.6 363.9h1M450.7 363.9h1M464.8 363.9h1M478.9 363.9h1M493 363.9h1M507.1 363.9h1M521.2 363.9h1M535.2 363.9h1M549.3 363.9h1M563.4 363.9h1M577.5 363.9h1M591.6 363.9h1M605.7 363.9h1M789.5 363.9h1M803.6 363.9h1M817.8 363.9h1M831.9 363.9h1M846 363.9h1M860.2 363.9h1M874.3 363.9h1M888.5 363.9h1M84.4 378.6h1M98.5 378.6h1M112.6 378.6h1M126.6 378.6h1M140.7 378.6h1M154.8 378.6h1M168.9 378.6h1M183 378.6h1M197.1 378.6h1M211.2 378.6h1M225.3 378.6h1M239.4 378.6h1M253.4 378.6h1M267.5 378.6h1M281.6 378.6h1M295.7 378.6h1M309.8 378.6h1M323.9 378.6h1M338 378.6h1M352.1 378.6h1M366.2 378.6h1M380.3 378.6h1M394.4 378.6h1M408.4 378.6h1M422.5 378.6h1M436.6 378.6h1M450.7 378.6h1M464.8 378.6h1M478.9 378.6h1M493 378.6h1M507.1 378.6h1M521.2 378.6h1M535.2 378.6h1M549.3 378.6h1M563.4 378.6h1M577.5 378.6h1M591.6 378.6h1M605.7 378.6h1M775.3 378.6h1M789.5 378.6h1M803.6 378.6h1M817.8 378.6h1M831.9 378.6h1M846 378.6h1M860.2 378.6h1M874.3 378.6h1M888.5 378.6h1M84.4 393.2h1M98.5 393.2h1M112.6 393.2h1M126.6 393.2h1M140.7 393.2h1M154.8 393.2h1M168.9 393.2h1M183 393.2h1M197.1 393.2h1M211.2 393.2h1M225.3 393.2h1M239.4 393.2h1M253.4 393.2h1M267.5 393.2h1M281.6 393.2h1M295.7 393.2h1M309.8 393.2h1M323.9 393.2h1M338 393.2h1M352.1 393.2h1M366.2 393.2h1M380.3 393.2h1M394.4 393.2h1M408.4 393.2h1M422.5 393.2h1M436.6 393.2h1M450.7 393.2h1M464.8 393.2h1M478.9 393.2h1M493 393.2h1M507.1 393.2h1M521.2 393.2h1M535.2 393.2h1M549.3 393.2h1M563.4 393.2h1M577.5 393.2h1M591.6 393.2h1M789.5 393.2h1M803.6 393.2h1M817.8 393.2h1M831.9 393.2h1M846 393.2h1M860.2 393.2h1M874.3 393.2h1M84.4 407.8h1M98.5 407.8h1M112.6 407.8h1M126.6 407.8h1M140.7 407.8h1M154.8 407.8h1M168.9 407.8h1M183 407.8h1M197.1 407.8h1M211.2 407.8h1M225.3 407.8h1M239.4 407.8h1M253.4 407.8h1M267.5 407.8h1M281.6 407.8h1M295.7 407.8h1M309.8 407.8h1M323.9 407.8h1M338 407.8h1M352.1 407.8h1M366.2 407.8h1M380.3 407.8h1M394.4 407.8h1M408.4 407.8h1M422.5 407.8h1M436.6 407.8h1M450.7 407.8h1M464.8 407.8h1M478.9 407.8h1M493 407.8h1M507.1 407.8h1M521.2 407.8h1M535.2 407.8h1M549.3 407.8h1M563.4 407.8h1M789.5 407.8h1M803.6 407.8h1M817.8 407.8h1M831.9 407.8h1M846 407.8h1M860.2 407.8h1M874.3 407.8h1M112.6 422.4h1M126.6 422.4h1M140.7 422.4h1M154.8 422.4h1M168.9 422.4h1M183 422.4h1M197.1 422.4h1M211.2 422.4h1M225.3 422.4h1M239.4 422.4h1M253.4 422.4h1M267.5 422.4h1M281.6 422.4h1M295.7 422.4h1M309.8 422.4h1M323.9 422.4h1M803.6 422.4h1M817.8 422.4h1M831.9 422.4h1M846 422.4h1M860.2 422.4h1M168.9 437h1M183 437h1M197.1 437h1M211.2 437h1M225.3 437h1M239.4 437h1M253.4 437h1M267.5 437h1M789.5 437h1M803.6 437h1M817.8 437h1M831.9 437h1M846 437h1M803.6 451.6h1M817.8 451.6h1M831.9 451.6h1" fill="none" stroke="#ff5a4a" stroke-width="1" opacity=".7"/>
</svg>
<!-- VEKTOREN panel -->
<div class="pan" style="left:24px;top:181px;width:98px;height:77px">
<div class="ptl"></div>
<div class="a" style="left:2px;top:1px;width:4px;height:4px;background:#30b020"></div><div class="a" style="left:4px;top:3px;width:4px;height:4px;background:#e0d020;border:1px solid #308020"></div>
<div class="t m" style="left:9px;top:2px;font-size:7.5px;color:#fff;transform-origin:0 0;transform:scaleX(0.805);top:1.300px">VEKTOREN</div>
<div class="btn" style="left:90px;top:1px;width:6px;height:6px;box-shadow:none"></div><div class="arr dn" style="left:91px;top:3px;border-width:2px 2px 0 2px;border-top:2px solid #000"></div>
<div class="combo" style="left:4px;top:10px;width:79px;height:13px"></div>
<div class="t" style="left:9px;top:12px;font-size:8.5px;color:#303030;transform-origin:0 0;transform:scaleX(0.911)">aso</div>
<div class="btn" style="left:72px;top:12px;width:10px;height:10px"></div><div class="arr dn" style="left:74px;top:16px"></div>
<div class="btn" style="left:83px;top:10px;width:8px;height:7px;border-color:#fff #808080 #808080 #fff;box-shadow:none"></div><div class="arr up" style="left:84px;top:11px"></div>
<div class="btn" style="left:83px;top:17px;width:8px;height:7px;border-color:#fff #808080 #808080 #fff;box-shadow:none"></div><div class="arr dn" style="left:84px;top:19px"></div>
<div class="t m" style="left:6px;top:28px;font-size:7px;letter-spacing:-.58px;color:#383838">Faktor: 0.112</div>
<div class="btn" style="left:78px;top:27px;width:15px;height:12px;background:#f0eee8;border-color:#f8f8f4 #505050 #505050 #f8f8f4"></div>
<svg class="a" style="left:80px;top:28px" width="11" height="9" viewBox="0 0 11 9"><path d="M1 5C1.500 2.500 4 1.500 7 2.500V1L10 3.500L7 6V4.500C4.500 3.500 2.500 4 1 5Z" fill="#000"/><path d="M2 7.500H3M5 7.500H6M8 7.500H9" stroke="#000" stroke-width="1"/></svg>
<div class="t m" style="left:6px;top:40px;font-size:7px;letter-spacing:-.58px;color:#383838">as1o: Min/Max:</div>
<div class="t m" style="left:6px;top:48px;font-size:7px;letter-spacing:-.58px;color:#383838;white-space:pre">  0./19.61 cm2/m</div>
<div class="t m" style="left:6px;top:57px;font-size:7px;letter-spacing:-.58px;color:#383838">as2o: Min/Max:</div>
<div class="t m" style="left:6px;top:66px;font-size:7px;letter-spacing:-.58px;color:#383838;white-space:pre">  0./ 7.13 cm2/m</div>
</div>
<!-- ANSICHT/EBENEN panel -->
<div class="pan" style="left:267px;top:75.500px;width:130px;height:114.500px">
<div class="ptl"></div>
<div class="a" style="left:2px;top:1px;width:4px;height:4px;background:#30b020"></div><div class="a" style="left:4px;top:3px;width:4px;height:4px;background:#e0d020;border:1px solid #308020"></div>
<div class="t m" style="left:9px;top:2px;font-size:7.5px;color:#fff;transform-origin:0 0;transform:scaleX(0.793);top:1.500px">ANSICHT/EBENEN</div>
<div class="btn" style="left:121px;top:1px;width:6px;height:6px;box-shadow:none"></div><div class="arr dn" style="left:122px;top:3px;border-width:2px 2px 0 2px;border-top:2px solid #000"></div>
<div class="combo" style="left:6px;top:13px;width:106.500px;height:13px"></div>
<div class="t" style="left:11px;top:15px;font-size:8.5px;color:#202020;transform-origin:0 0;transform:scaleX(0.916)">Ebene 1 +6.0m</div>
<div class="btn" style="left:102px;top:15px;width:9.500px;height:10px"></div><div class="arr dn" style="left:103.700px;top:19px"></div>
<div class="btn" style="left:113.500px;top:13px;width:8px;height:7px;border-color:#fff #808080 #808080 #fff;box-shadow:none"></div><div class="arr up" style="left:114.500px;top:14.500px"></div>
<div class="btn" style="left:113.500px;top:20px;width:8px;height:7px;border-color:#fff #808080 #808080 #fff;box-shadow:none"></div><div class="arr dn" style="left:114.500px;top:22px"></div>
<div class="sunk" style="left:6px;top:28px;width:97px;height:82px;background:#fffdf6"></div>
<div class="a" style="left:9.500px;top:53.500px;width:87.500px;height:18.500px;background:repeating-conic-gradient(#bcbab0 0 25%,#e0ded4 0 50%) 0 0/2px 2px"></div>
<svg class="a" style="left:7px;top:29px" width="95" height="80" viewBox="0 0 95 80">
<rect x="0.500" y="1.500" width="91.500" height="63.500" fill="none" stroke="#da5cda" stroke-width="1.200"/>
<rect x="2.500" y="24.500" width="87.500" height="18.500" fill="none" stroke="#484844" stroke-width="1"/>
<path d="M68.500 24.500V43" stroke="#484844" stroke-width="1.200"/>
<path d="M5.500 43V56.500H34.500V43" fill="none" stroke="#8c8a84" stroke-width="1"/>
<path d="M47 40.500H67" stroke="#e04040" stroke-width=".8"/>
<path d="M46.500 41V62" stroke="#a8e468" stroke-width="1"/>
<text x="71" y="41.800" font-family="Liberation Sans,sans-serif" font-size="8" fill="#e05060">x</text>
<text x="44.500" y="71.500" font-family="Liberation Sans,sans-serif" font-size="7" fill="#a8e070">y</text>
<text x="44" y="40" font-family="Liberation Sans,sans-serif" font-size="7.500" fill="#4070e0">z</text>
</svg>
<div class="t m" style="left:104px;top:28.500px;width:18px;text-align:center;font-size:7px;letter-spacing:-.45px;color:#484848">An-</div>
<div class="t m" style="left:102px;top:35.500px;width:22px;text-align:center;font-size:7px;letter-spacing:-.45px;color:#484848">sicht</div>
<div class="btn" style="left:107px;top:44px;width:15px;height:11px;border-color:#e8e6e0 #909090 #909090 #e8e6e0;box-shadow:none"></div>
<svg class="a" style="left:109px;top:45px" width="11" height="9" viewBox="0 0 11 9"><path d="M1 3.500H7V2L10 4L7 6V4.500H1Z" fill="#a8a6a0"/><path d="M2 7.500H3M5 7.500H6M8 7.500H9" stroke="#a8a6a0" stroke-width="1"/></svg>
<div class="t m" style="left:102px;top:57.500px;width:22px;text-align:center;font-size:7px;letter-spacing:-.45px;color:#484848">Aus-</div>
<div class="t m" style="left:102px;top:64px;width:22px;text-align:center;font-size:7px;letter-spacing:-.45px;color:#484848">wahl</div>
<div class="btn" style="left:107px;top:72px;width:15px;height:12px;background:#f0eee8;border-color:#f8f8f4 #505050 #505050 #f8f8f4"></div>
<svg class="a" style="left:109px;top:73px" width="11" height="9" viewBox="0 0 11 9"><path d="M1 5C1.500 2.500 4 1.500 7 2.500V1L10 3.500L7 6V4.500C4.500 3.500 2.500 4 1 5Z" fill="#000"/><path d="M2 7.500H3M5 7.500H6M8 7.500H9" stroke="#000" stroke-width="1"/></svg>
</div>
<!-- KONTUREN panel -->
<div class="pan" style="left:31px;top:528px;width:74px;height:148px">
<div class="ptl"></div><div class="a" style="left:-1px;top:0">
<div class="a" style="left:2px;top:1px;width:4px;height:4px;background:#30b020"></div><div class="a" style="left:4px;top:3px;width:4px;height:4px;background:#e0d020;border:1px solid #308020"></div>
<div class="t m" style="left:9px;top:2px;font-size:7.5px;color:#fff;transform-origin:0 0;transform:scaleX(0.825);top:1.300px">KONTUREN</div>
<div class="btn" style="left:65px;top:1px;width:6px;height:6px;box-shadow:none"></div><div class="arr dn" style="left:66px;top:3px;border-width:2px 2px 0 2px;border-top:2px solid #000"></div>
<div class="combo" style="left:4px;top:11px;width:54px;height:12px"></div>
<div class="t" style="left:8px;top:12px;font-size:9.500px;color:#303030;transform-origin:0 0;transform:scaleX(0.767)">as1o</div>
<div class="btn" style="left:48px;top:13px;width:9px;height:9px"></div><div class="arr dn" style="left:49px;top:16px"></div>
<div class="btn" style="left:59px;top:11px;width:8px;height:6px;border-color:#fff #808080 #808080 #fff;box-shadow:none"></div><div class="arr up" style="left:60px;top:12px"></div>
<div class="btn" style="left:59px;top:17px;width:8px;height:6px;border-color:#fff #808080 #808080 #fff;box-shadow:none"></div><div class="arr dn" style="left:60px;top:19px"></div>
<div class="t" style="left:6.500px;top:27px;font-size:9px;letter-spacing:.500px;color:#383838;transform-origin:0 0;transform:scaleX(0.814)">cm2/m</div>
<div class="btn" style="left:53px;top:26.500px;width:14px;height:12px;background:#f0eee8;border-color:#f8f8f4 #505050 #505050 #f8f8f4"></div>
<svg class="a" style="left:54.500px;top:28px" width="11" height="9" viewBox="0 0 11 9"><path d="M1 5C1.500 2.500 4 1.500 7 2.500V1L10 3.500L7 6V4.500C4.500 3.500 2.500 4 1 5Z" fill="#000"/><path d="M2 7.500H3M5 7.500H6M8 7.500H9" stroke="#000" stroke-width="1"/></svg>
<div class="sunk" style="left:4px;top:39px;width:64px;height:91px;background:#fffdf6"></div>
<svg class="a" style="left:7px;top:42.500px" width="12" height="86" viewBox="0 0 12 86"><rect x="1" y="1.00" width="9.500" height="7.480" fill="#f00000"/><rect x="1" y="7.60" width="9.500" height="1" fill="#7c7c64" opacity=".6"/><rect x="1" y="8.48" width="9.500" height="7.480" fill="#f05000"/><rect x="1" y="15.08" width="9.500" height="1" fill="#7c7c64" opacity=".6"/><rect x="1" y="15.96" width="9.500" height="7.480" fill="#f09000"/><rect x="1" y="22.56" width="9.500" height="1" fill="#7c7c64" opacity=".6"/><rect x="1" y="23.44" width="9.500" height="7.480" fill="#f0c000"/><rect x="1" y="30.04" width="9.500" height="1" fill="#7c7c64" opacity=".6"/><rect x="1" y="30.92" width="9.500" height="7.480" fill="#f0f000"/><rect x="1" y="37.52" width="9.500" height="1" fill="#7c7c64" opacity=".6"/><rect x="1" y="38.40" width="9.500" height="7.480" fill="#b0e800"/><rect x="1" y="45.00" width="9.500" height="1" fill="#7c7c64" opacity=".6"/><rect x="1" y="45.88" width="9.500" height="7.480" fill="#60e800"/><rect x="1" y="52.48" width="9.500" height="1" fill="#7c7c64" opacity=".6"/><rect x="1" y="53.36" width="9.500" height="7.480" fill="#30d870"/><rect x="1" y="59.96" width="9.500" height="1" fill="#7c7c64" opacity=".6"/><rect x="1" y="60.84" width="9.500" height="7.480" fill="#00c0c0"/><rect x="1" y="67.44" width="9.500" height="1" fill="#7c7c64" opacity=".6"/><rect x="1" y="68.32" width="9.500" height="7.480" fill="#0078d8"/><rect x="1" y="74.92" width="9.500" height="1" fill="#7c7c64" opacity=".6"/><rect x="1" y="75.80" width="9.500" height="7.480" fill="#0040e0"/><rect x="1" y="82.40" width="9.500" height="1" fill="#7c7c64" opacity=".6"/></svg>
<div class="t m" style="left:30px;top:47.0px;font-size:7px;color:#686868">0.300</div>
<div class="t m" style="left:30px;top:54.5px;font-size:7px;color:#686868">0.900</div>
<div class="t m" style="left:30px;top:62.1px;font-size:7px;color:#686868">1.500</div>
<div class="t m" style="left:30px;top:69.7px;font-size:7px;color:#686868">2.101</div>
<div class="t m" style="left:30px;top:77.2px;font-size:7px;color:#686868">2.701</div>
<div class="t m" style="left:30px;top:84.8px;font-size:7px;color:#686868">3.301</div>
<div class="t m" style="left:30px;top:92.3px;font-size:7px;color:#686868">3.901</div>
<div class="t m" style="left:30px;top:99.8px;font-size:7px;color:#686868">4.501</div>
<div class="t m" style="left:30px;top:107.4px;font-size:7px;color:#686868">5.101</div>
<div class="t m" style="left:30px;top:115.0px;font-size:7px;color:#686868">5.702</div>
<div class="t m" style="left:6px;top:131px;font-size:7px;letter-spacing:-.55px;color:#383838;white-space:pre">Min:   0.000</div>
<div class="t m" style="left:6px;top:139px;font-size:7px;letter-spacing:-.55px;color:#383838;white-space:pre">Max:  19.606</div>
</div></div>
</body></html>
